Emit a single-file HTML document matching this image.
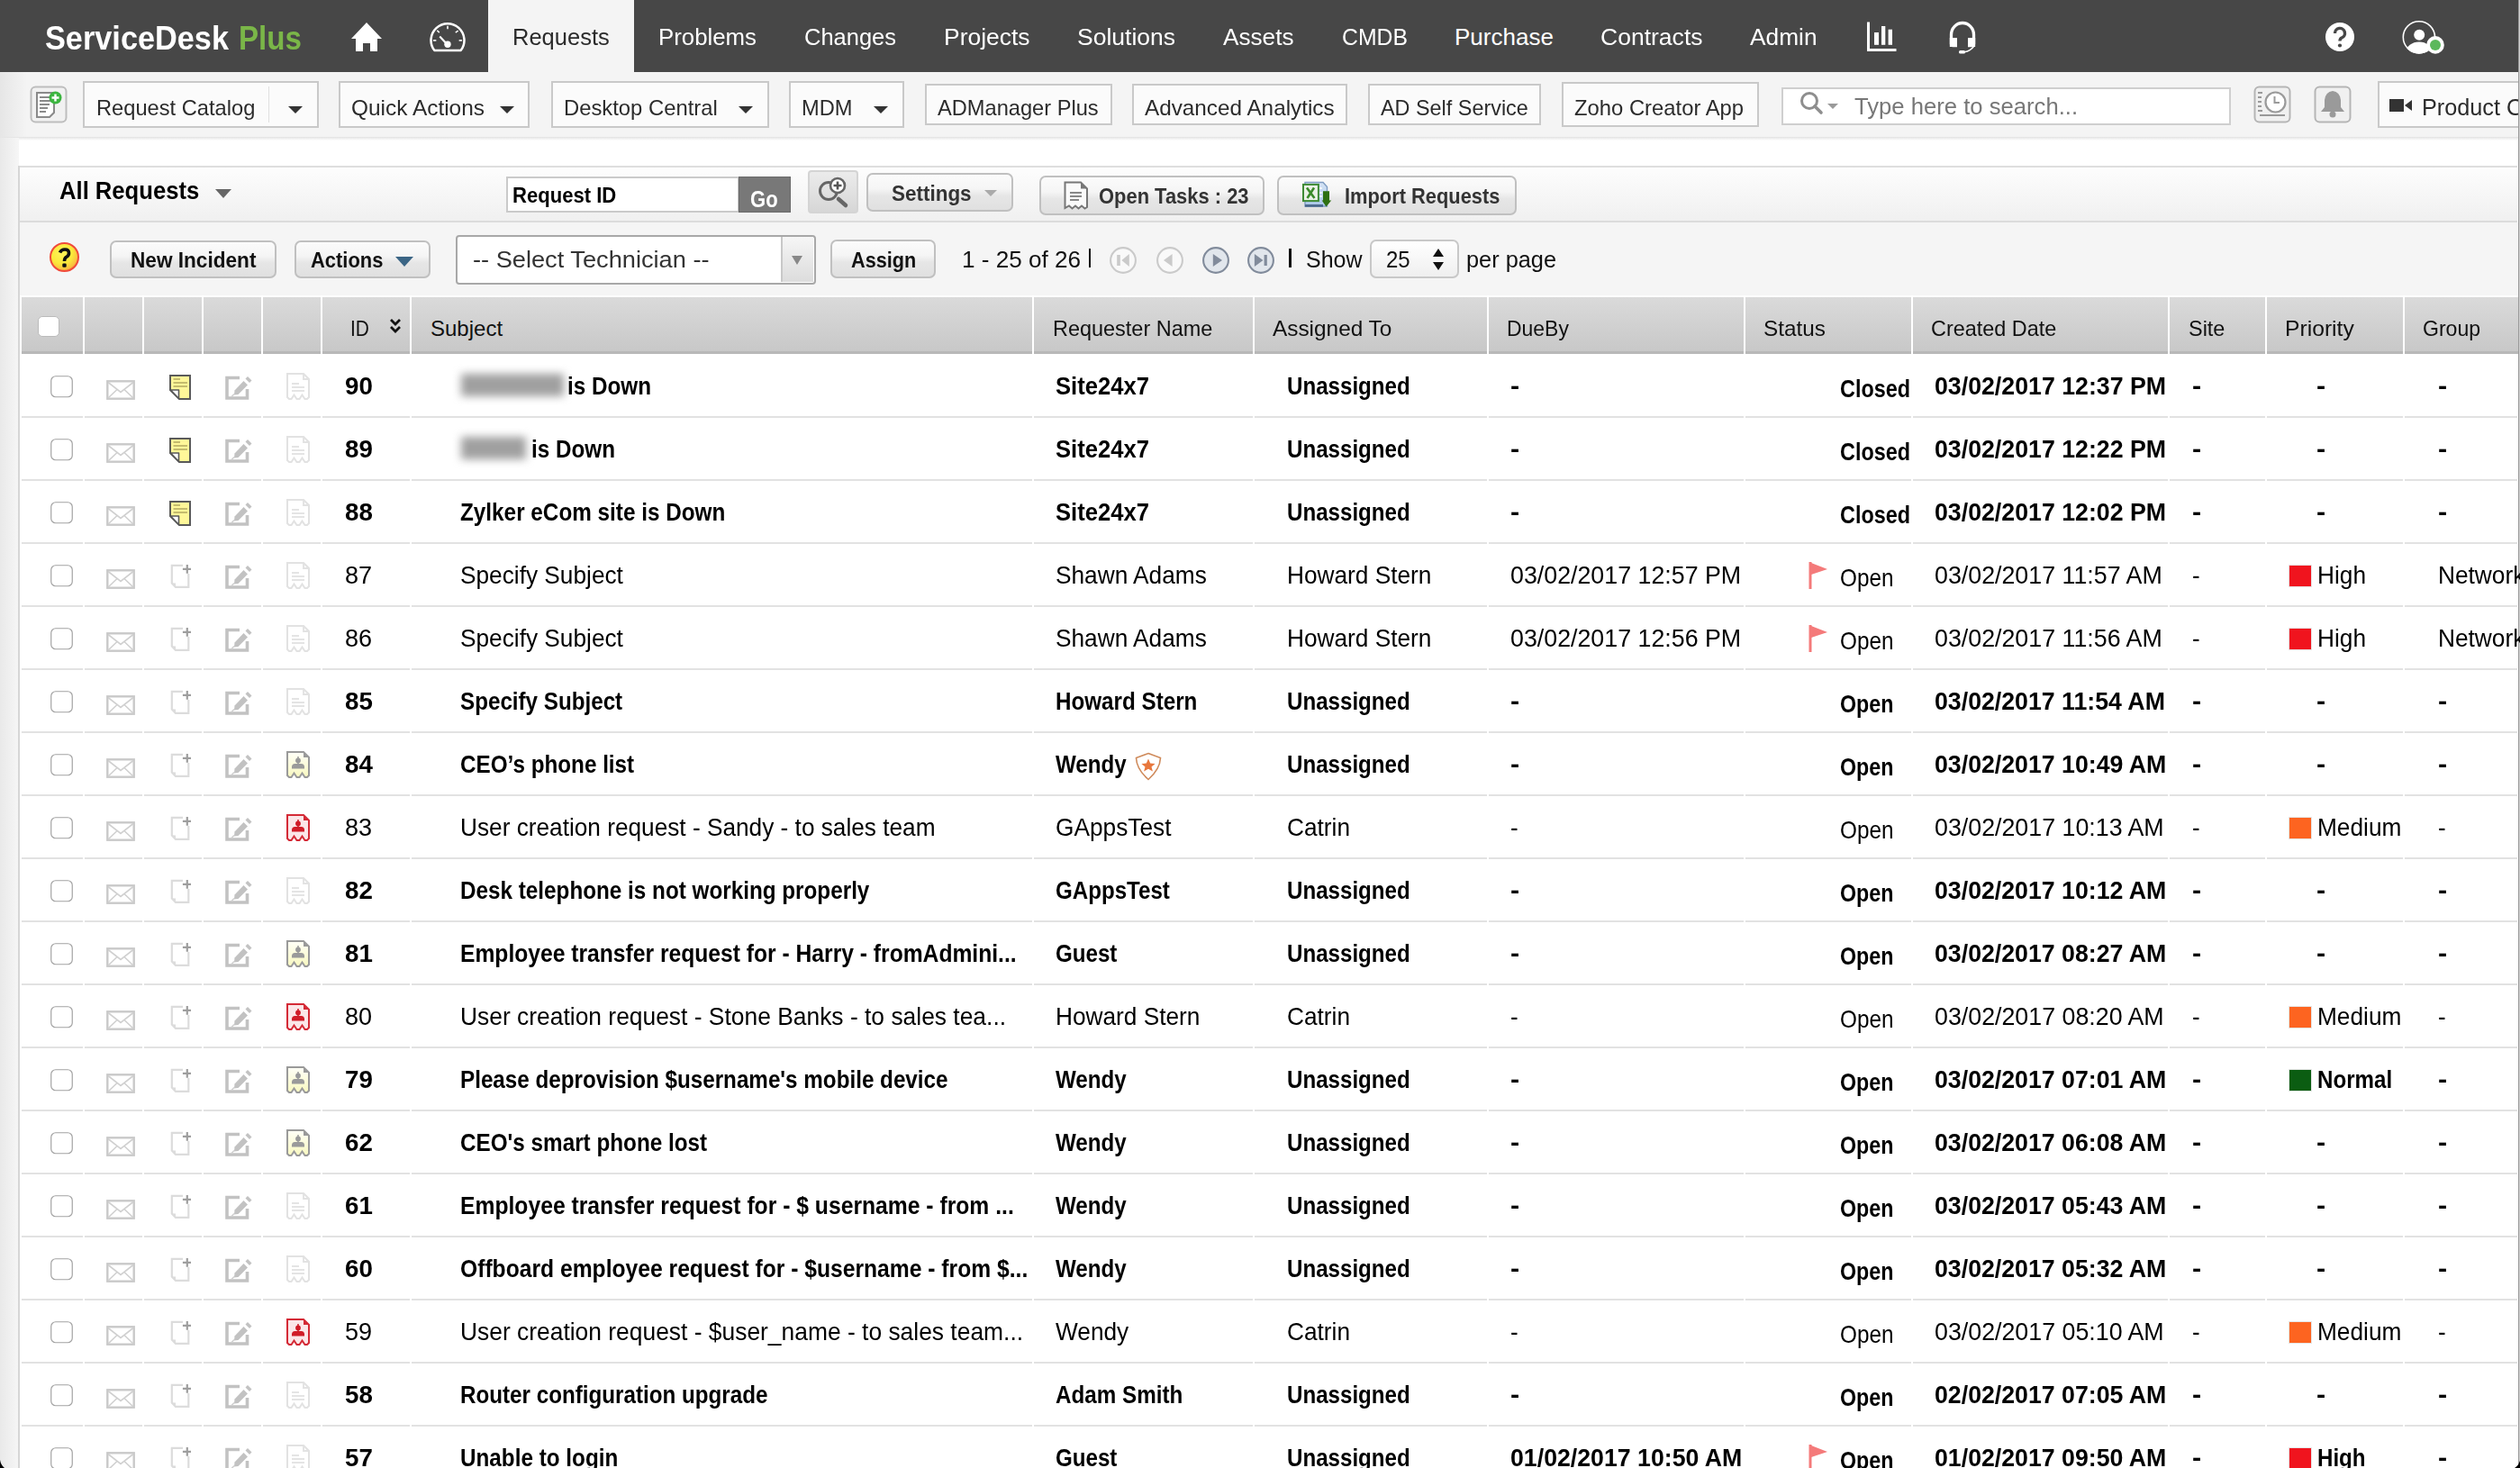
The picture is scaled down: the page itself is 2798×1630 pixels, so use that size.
<!DOCTYPE html><html><head><meta charset="utf-8"><style>

*{box-sizing:border-box;margin:0;padding:0}
html,body{width:2798px;height:1630px;overflow:hidden;background:#fff;font-family:"Liberation Sans", sans-serif;position:relative}
.abs{position:absolute}
.t{position:absolute;white-space:nowrap;line-height:1}
.tbb{position:absolute;border:2px solid #c9c9c9;background:#fbfbfb}
.tri{position:absolute;width:0;height:0;border-left:8px solid transparent;border-right:8px solid transparent;border-top:8px solid #333}
.btn{position:absolute;border:2px solid #c0c0c0;border-radius:7px;background:linear-gradient(#fbfbfb,#f5f5f5 40%,#e6e6e6 60%,#e0e0e0)}
.hc{position:absolute;top:330px;height:63px;background:linear-gradient(#dadada,#c8c8c8);border-bottom:3px solid #b8b8b8}
.cell{position:absolute;height:70px;border-bottom:2px solid #e2e2e2}

</style></head><body>
<div class="abs" style="left:0;top:0;width:2798px;height:80px;background:#474747"></div>
<div class="t" style="left:50.0px;top:23.6px;font-size:37px;font-weight:bold;color:#fff;transform:scaleX(0.9268);transform-origin:0 0;">ServiceDesk</div>
<div class="t" style="left:264.7px;top:23.6px;font-size:37px;font-weight:bold;color:#7ab648;transform:scaleX(0.8959);transform-origin:0 0;">Plus</div>
<svg class="abs" style="left:389px;top:24px" width="36" height="34" viewBox="0 0 36 34"><path d="M18 1 L35 19 L30 19 L30 33 L22 33 L22 24 L14 24 L14 33 L6 33 L6 19 L1 19 Z" fill="#fff"/></svg>
<svg class="abs" style="left:476px;top:23.5px" width="42" height="35" viewBox="0 0 42 36">
<path d="M6 33 A19 19 0 1 1 36 33 Z" fill="none" stroke="#fff" stroke-width="2.6" stroke-linejoin="round"/>
<line x1="21" y1="5" x2="21" y2="8.5" stroke="#fff" stroke-width="1.6"/>
<line x1="9" y1="10" x2="11.5" y2="12.5" stroke="#fff" stroke-width="1.6"/>
<line x1="33" y1="10.5" x2="30" y2="12.5" stroke="#fff" stroke-width="1.6"/>
<line x1="4.5" y1="21.5" x2="8" y2="21.5" stroke="#fff" stroke-width="1.6"/>
<line x1="34" y1="21.5" x2="37.5" y2="21.5" stroke="#fff" stroke-width="1.6"/>
<line x1="12" y1="17" x2="20" y2="25.5" stroke="#fff" stroke-width="2.2"/>
<circle cx="21" cy="26" r="3.8" fill="#fff"/>
</svg>
<div class="abs" style="left:542px;top:0;width:162px;height:80px;background:#f4f4f4"></div>
<div class="t" style="left:569.0px;top:27.9px;font-size:26px;color:#2b2b2b;transform:scaleX(0.9806);transform-origin:0 0;">Requests</div>
<div class="t" style="left:730.6px;top:27.9px;font-size:26px;color:#fff;transform:scaleX(0.9926);transform-origin:0 0;">Problems</div>
<div class="t" style="left:893.0px;top:27.9px;font-size:26px;color:#fff;transform:scaleX(0.9801);transform-origin:0 0;">Changes</div>
<div class="t" style="left:1047.5px;top:27.9px;font-size:26px;color:#fff;transform:scaleX(1.0169);transform-origin:0 0;">Projects</div>
<div class="t" style="left:1196.0px;top:27.9px;font-size:26px;color:#fff;transform:scaleX(1.0191);transform-origin:0 0;">Solutions</div>
<div class="t" style="left:1358.0px;top:27.9px;font-size:26px;color:#fff;transform:scaleX(1.0061);transform-origin:0 0;">Assets</div>
<div class="t" style="left:1490.0px;top:27.9px;font-size:26px;color:#fff;transform:scaleX(0.9536);transform-origin:0 0;">CMDB</div>
<div class="t" style="left:1615.0px;top:27.9px;font-size:26px;color:#fff;">Purchase</div>
<div class="t" style="left:1777.0px;top:27.9px;font-size:26px;color:#fff;transform:scaleX(1.0202);transform-origin:0 0;">Contracts</div>
<div class="t" style="left:1943.0px;top:27.9px;font-size:26px;color:#fff;transform:scaleX(1.0109);transform-origin:0 0;">Admin</div>
<svg class="abs" style="left:2071px;top:24px" width="36" height="34" viewBox="0 0 36 34">
<path d="M3.5 0.5 V31.5 H34.5" fill="none" stroke="#fff" stroke-width="3"/>
<rect x="10" y="12" width="5" height="13.8" fill="#fff"/><rect x="18" y="5" width="4.3" height="20.8" fill="#fff"/><rect x="25.6" y="8.7" width="4.4" height="17.1" fill="#fff"/>
</svg>
<svg class="abs" style="left:2162px;top:23px" width="34" height="38" viewBox="0 0 34 38">
<path d="M4.5 29 V15.5 A12.5 13 0 0 1 29.5 15.5 V29" fill="none" stroke="#fff" stroke-width="3.3"/>
<path d="M2.8 19 H11 V29.2 H6.5 Q2.8 29.2 2.8 25.5 Z" fill="#fff"/><path d="M23 19 H31.2 V25.5 Q31.2 29.2 27.5 29.2 H23 Z" fill="#fff"/>
<path d="M29.5 28.5 Q26 33.5 19 34.8" fill="none" stroke="#fff" stroke-width="1.4"/><rect x="13" y="33" width="7" height="3.4" rx="1.5" fill="#fff"/>
</svg>
<svg class="abs" style="left:2581px;top:24px" width="34" height="34" viewBox="0 0 34 34">
<circle cx="17" cy="17" r="16" fill="#fff"/>
<path d="M11.5 13 A5.5 5.5 0 1 1 19 18 Q17 19 17 21.5" fill="none" stroke="#474747" stroke-width="3.4"/>
<circle cx="17" cy="26.5" r="2.1" fill="#474747"/>
</svg>
<svg class="abs" style="left:2664px;top:21px" width="54" height="42" viewBox="0 0 54 42">
<defs><clipPath id="uc"><circle cx="21.9" cy="20.3" r="18.4"/></clipPath></defs>
<circle cx="21.9" cy="20.3" r="17.6" fill="none" stroke="#fff" stroke-width="1.6"/>
<circle cx="22.2" cy="17.8" r="6" fill="#fff"/>
<ellipse cx="22" cy="37" rx="14.5" ry="11.6" fill="#fff" clip-path="url(#uc)"/>
<circle cx="40" cy="28.9" r="9.8" fill="#fff"/><circle cx="40" cy="28.9" r="6" fill="#5cb85c"/>
</svg>
<div class="abs" style="left:0;top:80px;width:2798px;height:73px;background:#f4f4f4"></div>
<div class="abs" style="left:0;top:80px;width:30px;height:73px;background:linear-gradient(90deg,#e6e6e6,#f4f4f4)"></div>
<div class="abs" style="left:0;top:152px;width:2798px;height:4px;background:linear-gradient(#e2e2e2,#fff)"></div>
<svg class="abs" style="left:33px;top:95px" width="42" height="42" viewBox="0 0 42 42">
<rect x="1.5" y="1.5" width="39" height="39" rx="5" fill="#f1f1f1" stroke="#bdbdbd" stroke-width="2"/>
<path d="M8 8 H27 V30 L22 35 H8 Z" fill="#fff" stroke="#8a8a8a" stroke-width="2"/>
<path d="M11 13 H24 M11 17 H24 M11 21 H22 M11 25 H20 M11 29 H18" stroke="#8a8a8a" stroke-width="1.8"/>
<circle cx="28.5" cy="13.5" r="7" fill="#3cb540"/><path d="M28.5 9.5 V17.5 M24.5 13.5 H32.5" stroke="#fff" stroke-width="2.4"/>
</svg>
<div class="tbb" style="left:92px;top:90px;width:262px;height:52px"></div>
<div class="t" style="left:107.0px;top:107.6px;font-size:24px;color:#2b2b2b;transform:scaleX(0.9862);transform-origin:0 0;">Request Catalog</div>
<div class="abs" style="left:298px;top:96px;width:1px;height:40px;background:#e0e0e0"></div>
<div class="tri" style="left:320px;top:118px"></div>
<div class="tbb" style="left:376px;top:90px;width:212px;height:52px"></div>
<div class="t" style="left:390.3px;top:107.6px;font-size:24px;color:#2b2b2b;transform:scaleX(1.0179);transform-origin:0 0;">Quick Actions</div>
<div class="tri" style="left:555px;top:118px"></div>
<div class="tbb" style="left:612px;top:90px;width:242px;height:52px"></div>
<div class="t" style="left:625.7px;top:107.6px;font-size:24px;color:#2b2b2b;transform:scaleX(0.9920);transform-origin:0 0;">Desktop Central</div>
<div class="tri" style="left:820px;top:118px"></div>
<div class="tbb" style="left:876px;top:90px;width:128px;height:52px"></div>
<div class="t" style="left:890.0px;top:107.6px;font-size:24px;color:#2b2b2b;transform:scaleX(0.9840);transform-origin:0 0;">MDM</div>
<div class="tri" style="left:970px;top:118px"></div>
<div class="tbb" style="left:1027px;top:93px;width:208px;height:46px"></div>
<div class="t" style="left:1041.0px;top:107.6px;font-size:24px;color:#2b2b2b;transform:scaleX(0.9845);transform-origin:0 0;">ADManager Plus</div>
<div class="tbb" style="left:1257px;top:93px;width:239px;height:46px"></div>
<div class="t" style="left:1271.0px;top:107.6px;font-size:24px;color:#2b2b2b;transform:scaleX(1.0119);transform-origin:0 0;">Advanced Analytics</div>
<div class="tbb" style="left:1519px;top:93px;width:192px;height:46px"></div>
<div class="t" style="left:1533.0px;top:107.6px;font-size:24px;color:#2b2b2b;transform:scaleX(0.9747);transform-origin:0 0;">AD Self Service</div>
<div class="tbb" style="left:1734px;top:91px;width:219px;height:50px"></div>
<div class="t" style="left:1747.6px;top:107.6px;font-size:24px;color:#2b2b2b;transform:scaleX(0.9924);transform-origin:0 0;">Zoho Creator App</div>
<div class="abs" style="left:1978px;top:97px;width:499px;height:42px;background:#fff;border:2px solid #cfcfcf"></div>
<svg class="abs" style="left:1996px;top:100px" width="52" height="32" viewBox="0 0 52 32">
<circle cx="13" cy="12" r="8.5" fill="none" stroke="#8e8e8e" stroke-width="3"/><path d="M19 18 L26 25" stroke="#8e8e8e" stroke-width="3.6" stroke-linecap="round"/>
<path d="M33 15 H45 L39 21 Z" fill="#9a9a9a"/></svg>
<div class="t" style="left:2058.6px;top:105.8px;font-size:25px;color:#777;transform:scaleX(1.0257);transform-origin:0 0;">Type here to search...</div>
<svg class="abs" style="left:2502px;top:95px" width="42" height="42" viewBox="0 0 42 42">
<rect x="1.5" y="1.5" width="39" height="39" rx="5" fill="#f0f0f0" stroke="#b5b5b5" stroke-width="2"/>
<path d="M5 8 H10 M5 13 H9 M5 18 H9 M5 23 H9 M5 28 H10 M7 33 H35" stroke="#999" stroke-width="1.8"/>
<circle cx="24.5" cy="18.5" r="11" fill="#fff" stroke="#9a9a9a" stroke-width="2.2"/><path d="M23.5 12 V19 H29" fill="none" stroke="#9a9a9a" stroke-width="2"/>
</svg>
<svg class="abs" style="left:2569px;top:95px" width="42" height="42" viewBox="0 0 42 42">
<rect x="1.5" y="1.5" width="39" height="39" rx="5" fill="#f0f0f0" stroke="#b5b5b5" stroke-width="2"/>
<path d="M21 6 Q13 7 12 16 V24 L8 29 H34 L30 24 V16 Q29 7 21 6 Z" fill="#9a9a9a"/><circle cx="21" cy="32" r="3.5" fill="#9a9a9a"/>
</svg>
<div class="tbb" style="left:2640px;top:90px;width:200px;height:52px"></div>
<svg class="abs" style="left:2653px;top:108px" width="26" height="18" viewBox="0 0 26 18"><rect x="0" y="2" width="16" height="14" fill="#333"/><path d="M17 9 L25 3 V15 Z" fill="#333"/></svg>
<div class="t" style="left:2689.0px;top:106.8px;font-size:25px;color:#2b2b2b;transform:scaleX(1.0096);transform-origin:0 0;">Product Overview</div>
<div class="abs" style="left:0;top:153px;width:21px;height:1477px;background:linear-gradient(90deg,#e9e9e9,#f6f6f6)"></div>
<div class="abs" style="left:20px;top:184px;width:2px;height:1446px;background:#d6d6d6"></div>
<div class="abs" style="left:2796px;top:0;width:1px;height:1630px;background:#9a9a9a"></div><div class="abs" style="left:2797px;top:0;width:1px;height:1630px;background:#cfcfcf"></div>
<div class="abs" style="left:22px;top:184px;width:2773px;height:63px;background:linear-gradient(#fdfdfd,#f0f0f0);border-top:2px solid #dedede;border-bottom:2px solid #dcdcdc"></div>
<div class="t" style="left:66.4px;top:199.1px;font-size:27px;font-weight:bold;color:#000;transform:scaleX(0.9491);transform-origin:0 0;">All Requests</div>
<div class="abs" style="left:239px;top:210px;width:0;height:0;border-left:9px solid transparent;border-right:9px solid transparent;border-top:10px solid #666"></div>
<div class="abs" style="left:562px;top:196px;width:259px;height:40px;background:#fff;border:2px solid #cacaca"></div>
<div class="t" style="left:569.1px;top:205.2px;font-size:24.5px;font-weight:bold;color:#000;transform:scaleX(0.9011);transform-origin:0 0;">Request ID</div>
<div class="abs" style="left:820px;top:196px;width:58px;height:40px;background:#787878;border:1px solid #6a6a6a"></div>
<div class="t" style="left:832.7px;top:208.8px;font-size:25px;font-weight:bold;color:#fff;transform:scaleX(0.8815);transform-origin:0 0;">Go</div>
<svg class="abs" style="left:897px;top:189px" width="56" height="48" viewBox="0 0 56 48">
<defs><linearGradient id="mg" x1="0" y1="0" x2="0" y2="1"><stop offset="0" stop-color="#ececec"/><stop offset="1" stop-color="#d6d6d6"/></linearGradient></defs>
<rect x="1" y="1" width="54" height="46" rx="3" fill="url(#mg)" stroke="#d4d4d4" stroke-width="2"/>
<circle cx="23" cy="23" r="9.5" fill="none" stroke="#666" stroke-width="3"/><path d="M34 32 L42 39" stroke="#666" stroke-width="4.5" stroke-linecap="round"/>
<circle cx="33" cy="17" r="8" fill="#fff" stroke="#666" stroke-width="2.6"/><path d="M33 12.5 V21.5 M28.5 17 H37.5" stroke="#555" stroke-width="2.6"/>
</svg>
<div class="btn" style="left:962px;top:192px;width:163px;height:43px"></div>
<div class="t" style="left:990.0px;top:203.2px;font-size:24px;font-weight:bold;color:#333;transform:scaleX(0.9359);transform-origin:0 0;">Settings</div>
<div class="abs" style="left:1093px;top:211px;width:0;height:0;border-left:7px solid transparent;border-right:7px solid transparent;border-top:7px solid #aaa"></div>
<div class="btn" style="left:1154px;top:195px;width:250px;height:44px"></div>
<div class="t" style="left:1220.3px;top:205.6px;font-size:24px;font-weight:bold;color:#333;transform:scaleX(0.9134);transform-origin:0 0;">Open Tasks : 23</div>
<svg class="abs" style="left:1180px;top:201px" width="30" height="32" viewBox="0 0 30 32">
<path d="M2.5 1.5 H20 L27 8.5 V29 L24.5 30.5 L21 27.5 L17.5 30.5 L14 27.5 L10.5 30.5 L7 27.5 L2.5 30 Z" fill="#fafafa" stroke="#777" stroke-width="2"/>
<path d="M20 1.5 V8.5 H27 Z" fill="#777"/><path d="M8 13 H21 M8 17 H21 M8 21 H18" stroke="#888" stroke-width="1.8"/></svg>
<div class="btn" style="left:1418px;top:195px;width:266px;height:44px"></div>
<div class="t" style="left:1492.6px;top:205.6px;font-size:24px;font-weight:bold;color:#333;transform:scaleX(0.9105);transform-origin:0 0;">Import Requests</div>
<svg class="abs" style="left:1444px;top:200px" width="36" height="32" viewBox="0 0 36 32">
<defs><linearGradient id="xb" x1="0" y1="0" x2="0" y2="1"><stop offset="0" stop-color="#d6e4f5"/><stop offset="1" stop-color="#a9c6ea"/></linearGradient></defs>
<path d="M5 2.5 H25 L29.5 7.5 V29 H5 Z" fill="url(#xb)" stroke="#7f9cc2" stroke-width="1.4"/>
<rect x="5" y="27" width="20" height="2.8" fill="#4d6a8e"/>
<path d="M21 9 H24 M21 14 H24 M21 18 H24" stroke="#fff" stroke-width="1.6"/>
<rect x="3" y="4.9" width="16.9" height="18.2" fill="#eaf1e6" stroke="#3e8a34" stroke-width="2"/>
<path d="M7 8.5 L15.5 20 M15 8.5 L7.5 20" stroke="#3a8a2a" stroke-width="2.6"/>
<path d="M25 12.2 H32 V22.6 H34.2 L28.5 29.4 L23.7 22.6 H25 Z" fill="#2f7012"/>
</svg>
<div class="abs" style="left:22px;top:247px;width:2774px;height:81px;background:#f5f5f5"></div>
<svg class="abs" style="left:54px;top:268px" width="35" height="35" viewBox="0 0 35 35">
<defs><radialGradient id="yg" cx="0.4" cy="0.35" r="0.7"><stop offset="0" stop-color="#fff35a"/><stop offset="0.55" stop-color="#fbe93a"/><stop offset="0.85" stop-color="#f9c040"/><stop offset="1" stop-color="#f58a30"/></radialGradient></defs>
<circle cx="17.5" cy="17.5" r="15.5" fill="url(#yg)" stroke="#f04a3a" stroke-width="2"/>
<path d="M12.5 12.5 Q14 9 18 9 Q22.5 9 22.5 13 Q22.5 16 19.5 17.5 Q17.5 18.8 17.5 22" fill="none" stroke="#111" stroke-width="3.6"/><rect x="15.3" y="24.5" width="4.4" height="4.2" rx="1.2" fill="#111"/></svg>
<div class="btn" style="left:122px;top:267px;width:185px;height:42px"></div>
<div class="t" style="left:144.6px;top:277.4px;font-size:24px;font-weight:bold;color:#111;transform:scaleX(0.9418);transform-origin:0 0;">New Incident</div>
<div class="btn" style="left:327px;top:267px;width:151px;height:42px"></div>
<div class="t" style="left:344.6px;top:277.4px;font-size:24px;font-weight:bold;color:#111;transform:scaleX(0.9136);transform-origin:0 0;">Actions</div>
<div class="abs" style="left:439px;top:285px;width:0;height:0;border-left:10px solid transparent;border-right:10px solid transparent;border-top:11px solid #3b6585"></div>
<div class="abs" style="left:506px;top:260.5px;width:400px;height:55px;background:#fff;border:2px solid #a8a8a8;border-radius:4px"></div>
<div class="abs" style="left:867px;top:263px;width:36px;height:50px;background:linear-gradient(#f6f6f6,#dcdcdc);border-left:2px solid #c8c8c8"></div>
<div class="abs" style="left:879px;top:284px;width:0;height:0;border-left:6px solid transparent;border-right:6px solid transparent;border-top:10px solid #888"></div>
<div class="t" style="left:525.0px;top:274.9px;font-size:26px;color:#333;transform:scaleX(1.0461);transform-origin:0 0;">-- Select Technician --</div>
<div class="btn" style="left:922px;top:266px;width:117px;height:43px"></div>
<div class="t" style="left:944.6px;top:277.4px;font-size:24px;font-weight:bold;color:#111;transform:scaleX(0.9024);transform-origin:0 0;">Assign</div>
<div class="t" style="left:1068.0px;top:274.9px;font-size:26px;color:#111;transform:scaleX(1.0036);transform-origin:0 0;">1 - 25 of 26</div>
<div class="abs" style="left:1208.5px;top:275.5px;width:2.6px;height:21.5px;background:#111"></div>
<svg class="abs" style="left:1230.8px;top:273px" width="32" height="32" viewBox="0 0 32 32"><circle cx="16" cy="16" r="13.9" fill="#f9f9f9" stroke="#cacaca" stroke-width="2.1"/><rect x="9.2" y="10" width="3.6" height="12" fill="#cacaca"/><path d="M14.4 16 L22.8 9 V23 Z" fill="#cacaca"/></svg>
<svg class="abs" style="left:1283px;top:273px" width="32" height="32" viewBox="0 0 32 32"><circle cx="16" cy="16" r="13.9" fill="#f9f9f9" stroke="#cacaca" stroke-width="2.1"/><path d="M9 16 L18.6 9 V23 Z" fill="#cacaca"/></svg>
<svg class="abs" style="left:1334px;top:273px" width="32" height="32" viewBox="0 0 32 32"><circle cx="16" cy="16" r="13.9" fill="#e1e6ec" stroke="#818b9b" stroke-width="2.1"/><path d="M23 16 L12.8 9 V23 Z" fill="#818b9b"/></svg>
<svg class="abs" style="left:1384.2px;top:273px" width="32" height="32" viewBox="0 0 32 32"><circle cx="16" cy="16" r="13.9" fill="#e1e6ec" stroke="#818b9b" stroke-width="2.1"/><path d="M18.4 16 L8.9 9 V23 Z" fill="#818b9b"/><rect x="19.6" y="10" width="3.2" height="12" fill="#818b9b"/></svg>
<div class="abs" style="left:1431px;top:275.5px;width:2.6px;height:21.5px;background:#111"></div>
<div class="t" style="left:1450.0px;top:274.9px;font-size:26px;color:#111;transform:scaleX(0.9610);transform-origin:0 0;">Show</div>
<div class="abs" style="left:1521px;top:266px;width:99px;height:43px;background:linear-gradient(#fff,#efefef);border:2px solid #c8c8c8;border-radius:7px"></div>
<div class="t" style="left:1539.3px;top:274.9px;font-size:26px;color:#111;transform:scaleX(0.9233);transform-origin:0 0;">25</div>
<svg class="abs" style="left:1590px;top:274px" width="14" height="28" viewBox="0 0 14 28"><path d="M7 2 L13 11 H1 Z M7 26 L13 17 H1 Z" fill="#111"/></svg>
<div class="t" style="left:1628.0px;top:274.9px;font-size:26px;color:#111;transform:scaleX(0.9744);transform-origin:0 0;">per page</div>
<div class="hc" style="left:24px;width:68px"></div>
<div class="hc" style="left:94px;width:64px"></div>
<div class="hc" style="left:160px;width:64px"></div>
<div class="hc" style="left:226px;width:64px"></div>
<div class="hc" style="left:292px;width:64px"></div>
<div class="hc" style="left:358px;width:97px"></div>
<div class="hc" style="left:457px;width:689px"></div>
<div class="hc" style="left:1148px;width:243px"></div>
<div class="hc" style="left:1393px;width:258px"></div>
<div class="hc" style="left:1653px;width:283px"></div>
<div class="hc" style="left:1938px;width:184px"></div>
<div class="hc" style="left:2124px;width:283px"></div>
<div class="hc" style="left:2409px;width:106px"></div>
<div class="hc" style="left:2517px;width:151px"></div>
<div class="hc" style="left:2670px;width:126px"></div>
<div class="abs" style="left:42px;top:351px;width:24px;height:23px;background:#fff;border:1px solid #bbb;border-radius:5px"></div>
<div class="t" style="left:389.4px;top:352.9px;font-size:24px;color:#111;transform:scaleX(0.8708);transform-origin:0 0;">ID</div>
<div class="t" style="left:478.0px;top:352.9px;font-size:24px;color:#111;">Subject</div>
<div class="t" style="left:1169.2px;top:352.9px;font-size:24px;color:#111;transform:scaleX(0.9774);transform-origin:0 0;">Requester Name</div>
<div class="t" style="left:1413.4px;top:352.9px;font-size:24px;color:#111;transform:scaleX(1.0153);transform-origin:0 0;">Assigned To</div>
<div class="t" style="left:1672.9px;top:352.9px;font-size:24px;color:#111;transform:scaleX(0.9565);transform-origin:0 0;">DueBy</div>
<div class="t" style="left:1958.4px;top:352.9px;font-size:24px;color:#111;transform:scaleX(1.0127);transform-origin:0 0;">Status</div>
<div class="t" style="left:2143.8px;top:352.9px;font-size:24px;color:#111;transform:scaleX(0.9752);transform-origin:0 0;">Created Date</div>
<div class="t" style="left:2429.6px;top:352.9px;font-size:24px;color:#111;transform:scaleX(0.9769);transform-origin:0 0;">Site</div>
<div class="t" style="left:2537.0px;top:352.9px;font-size:24px;color:#111;transform:scaleX(1.0285);transform-origin:0 0;">Priority</div>
<div class="t" style="left:2690.2px;top:352.9px;font-size:24px;color:#111;transform:scaleX(0.9611);transform-origin:0 0;">Group</div>
<svg class="abs" style="left:432px;top:353px" width="14" height="19" viewBox="0 0 14 19"><path d="M2 2 L7 7 L12 2 M2 10 L7 15 L12 10" fill="none" stroke="#111" stroke-width="2.8"/></svg>
<div class="cell" style="left:24px;top:394px;width:68px"></div>
<div class="cell" style="left:94px;top:394px;width:64px"></div>
<div class="cell" style="left:160px;top:394px;width:64px"></div>
<div class="cell" style="left:226px;top:394px;width:64px"></div>
<div class="cell" style="left:292px;top:394px;width:64px"></div>
<div class="cell" style="left:358px;top:394px;width:97px"></div>
<div class="cell" style="left:457px;top:394px;width:689px"></div>
<div class="cell" style="left:1148px;top:394px;width:243px"></div>
<div class="cell" style="left:1393px;top:394px;width:258px"></div>
<div class="cell" style="left:1653px;top:394px;width:283px"></div>
<div class="cell" style="left:1938px;top:394px;width:184px"></div>
<div class="cell" style="left:2124px;top:394px;width:283px"></div>
<div class="cell" style="left:2409px;top:394px;width:106px"></div>
<div class="cell" style="left:2517px;top:394px;width:151px"></div>
<div class="cell" style="left:2670px;top:394px;width:125px"></div>
<svg class="abs" style="left:55.5px;top:416.5px" width="25" height="25" viewBox="0 0 25 25"><rect x="0.75" y="0.75" width="23.5" height="23" rx="5" fill="#fff" stroke="#a3a3a3" stroke-width="1.2"/></svg>
<svg class="abs" style="left:118px;top:422px" width="32" height="22" viewBox="0 0 32 22"><rect x="1.3" y="1.3" width="29.4" height="19.4" fill="#fff" stroke="#c9c9c9" stroke-width="2.4"/><path d="M2 2.5 L16 13.5 L30 2.5 M2 20 L12 10.5 M30 20 L20 10.5" fill="none" stroke="#d0d0d0" stroke-width="1.6"/></svg>
<svg class="abs" style="left:188px;top:416px" width="24" height="28" viewBox="0 0 24 28"><path d="M1 1 H23 V27 H11 L1 17 Z" fill="#fff799" stroke="#5a5a5a" stroke-width="2"/><path d="M1.5 17 H10.5 V26.5 Z" fill="#fff" stroke="#5a5a5a" stroke-width="1.6" stroke-linejoin="round"/><path d="M4.5 5 H12 M4.5 9 H20 M4.5 13 H20" stroke="#b3a960" stroke-width="1.6"/></svg>
<svg class="abs" style="left:250px;top:416px" width="30" height="28" viewBox="0 0 30 28"><path d="M16 3.5 H2 V26 H24.5 V16" fill="none" stroke="#c2c2c2" stroke-width="3.6"/><path d="M10.5 17.5 L20.5 7 L25 11.5 L14.5 22 L10 22.5 Z" fill="#c2c2c2"/><path d="M22.5 4.5 L25 2 L29.5 6.5 L27 9 Z" fill="#c2c2c2"/><path d="M7 24.5 L10 21.5" stroke="#d0d0d0" stroke-width="1.6"/></svg>
<svg class="abs" style="left:318px;top:414px" width="26" height="30" viewBox="0 0 26 30"><path d="M1 1 H19 L25 7 V27 L23 29 H20.5 L17.5 24.5 L14.5 29 H11.5 L8.5 24.5 L5.5 29 H3 L1 27 Z" fill="#fff" stroke="#e2e2e2" stroke-width="2"/><path d="M19 1 V7 H25" fill="none" stroke="#e2e2e2" stroke-width="1.8"/><path d="M6 12 H14 M6 16 H20 M6 20 H20" stroke="#e4e4e4" stroke-width="1.8"/></svg>
<div class="t" style="left:382.5px;top:414.6px;font-size:27.3px;font-weight:bold;color:#000;transform:scaleX(1.0152);transform-origin:0 0;">90</div>
<div class="abs" style="left:512px;top:415px;width:114px;height:25px;background:#a0a0a0;filter:blur(5px)"></div>
<div class="t" style="left:630.0px;top:414.6px;font-size:27.3px;font-weight:bold;color:#000;transform:scaleX(0.8888);transform-origin:0 0;">is Down</div>
<div class="t" style="left:1172.0px;top:414.6px;font-size:27.3px;font-weight:bold;color:#000;transform:scaleX(0.9378);transform-origin:0 0;">Site24x7</div>
<div class="t" style="left:1429.0px;top:414.6px;font-size:27.3px;font-weight:bold;color:#000;transform:scaleX(0.8838);transform-origin:0 0;">Unassigned</div>
<div class="t" style="left:1677.0px;top:414.6px;font-size:27.3px;font-weight:bold;color:#000;transform:scaleX(1.1143);transform-origin:0 0;">-</div>
<div class="t" style="left:2043.0px;top:418.3px;font-size:27.3px;font-weight:bold;color:#000;transform:scaleX(0.8570);transform-origin:0 0;">Closed</div>
<div class="t" style="left:2148.0px;top:414.6px;font-size:27.3px;font-weight:bold;color:#000;transform:scaleX(0.9790);transform-origin:0 0;">03/02/2017 12:37 PM</div>
<div class="t" style="left:2434.0px;top:414.6px;font-size:27.3px;font-weight:bold;color:#000;transform:scaleX(1.1143);transform-origin:0 0;">-</div>
<div class="t" style="left:2572.0px;top:414.6px;font-size:27.3px;font-weight:bold;color:#000;transform:scaleX(1.1143);transform-origin:0 0;">-</div>
<div class="t" style="left:2707.0px;top:414.6px;font-size:27.3px;font-weight:bold;color:#000;transform:scaleX(1.1143);transform-origin:0 0;">-</div>
<div class="cell" style="left:24px;top:464px;width:68px"></div>
<div class="cell" style="left:94px;top:464px;width:64px"></div>
<div class="cell" style="left:160px;top:464px;width:64px"></div>
<div class="cell" style="left:226px;top:464px;width:64px"></div>
<div class="cell" style="left:292px;top:464px;width:64px"></div>
<div class="cell" style="left:358px;top:464px;width:97px"></div>
<div class="cell" style="left:457px;top:464px;width:689px"></div>
<div class="cell" style="left:1148px;top:464px;width:243px"></div>
<div class="cell" style="left:1393px;top:464px;width:258px"></div>
<div class="cell" style="left:1653px;top:464px;width:283px"></div>
<div class="cell" style="left:1938px;top:464px;width:184px"></div>
<div class="cell" style="left:2124px;top:464px;width:283px"></div>
<div class="cell" style="left:2409px;top:464px;width:106px"></div>
<div class="cell" style="left:2517px;top:464px;width:151px"></div>
<div class="cell" style="left:2670px;top:464px;width:125px"></div>
<svg class="abs" style="left:55.5px;top:486.5px" width="25" height="25" viewBox="0 0 25 25"><rect x="0.75" y="0.75" width="23.5" height="23" rx="5" fill="#fff" stroke="#a3a3a3" stroke-width="1.2"/></svg>
<svg class="abs" style="left:118px;top:492px" width="32" height="22" viewBox="0 0 32 22"><rect x="1.3" y="1.3" width="29.4" height="19.4" fill="#fff" stroke="#c9c9c9" stroke-width="2.4"/><path d="M2 2.5 L16 13.5 L30 2.5 M2 20 L12 10.5 M30 20 L20 10.5" fill="none" stroke="#d0d0d0" stroke-width="1.6"/></svg>
<svg class="abs" style="left:188px;top:486px" width="24" height="28" viewBox="0 0 24 28"><path d="M1 1 H23 V27 H11 L1 17 Z" fill="#fff799" stroke="#5a5a5a" stroke-width="2"/><path d="M1.5 17 H10.5 V26.5 Z" fill="#fff" stroke="#5a5a5a" stroke-width="1.6" stroke-linejoin="round"/><path d="M4.5 5 H12 M4.5 9 H20 M4.5 13 H20" stroke="#b3a960" stroke-width="1.6"/></svg>
<svg class="abs" style="left:250px;top:486px" width="30" height="28" viewBox="0 0 30 28"><path d="M16 3.5 H2 V26 H24.5 V16" fill="none" stroke="#c2c2c2" stroke-width="3.6"/><path d="M10.5 17.5 L20.5 7 L25 11.5 L14.5 22 L10 22.5 Z" fill="#c2c2c2"/><path d="M22.5 4.5 L25 2 L29.5 6.5 L27 9 Z" fill="#c2c2c2"/><path d="M7 24.5 L10 21.5" stroke="#d0d0d0" stroke-width="1.6"/></svg>
<svg class="abs" style="left:318px;top:484px" width="26" height="30" viewBox="0 0 26 30"><path d="M1 1 H19 L25 7 V27 L23 29 H20.5 L17.5 24.5 L14.5 29 H11.5 L8.5 24.5 L5.5 29 H3 L1 27 Z" fill="#fff" stroke="#e2e2e2" stroke-width="2"/><path d="M19 1 V7 H25" fill="none" stroke="#e2e2e2" stroke-width="1.8"/><path d="M6 12 H14 M6 16 H20 M6 20 H20" stroke="#e4e4e4" stroke-width="1.8"/></svg>
<div class="t" style="left:382.5px;top:484.6px;font-size:27.3px;font-weight:bold;color:#000;transform:scaleX(1.0152);transform-origin:0 0;">89</div>
<div class="abs" style="left:512px;top:485px;width:72px;height:25px;background:#a0a0a0;filter:blur(5px)"></div>
<div class="t" style="left:590.0px;top:484.6px;font-size:27.3px;font-weight:bold;color:#000;transform:scaleX(0.8888);transform-origin:0 0;">is Down</div>
<div class="t" style="left:1172.0px;top:484.6px;font-size:27.3px;font-weight:bold;color:#000;transform:scaleX(0.9378);transform-origin:0 0;">Site24x7</div>
<div class="t" style="left:1429.0px;top:484.6px;font-size:27.3px;font-weight:bold;color:#000;transform:scaleX(0.8838);transform-origin:0 0;">Unassigned</div>
<div class="t" style="left:1677.0px;top:484.6px;font-size:27.3px;font-weight:bold;color:#000;transform:scaleX(1.1143);transform-origin:0 0;">-</div>
<div class="t" style="left:2043.0px;top:488.3px;font-size:27.3px;font-weight:bold;color:#000;transform:scaleX(0.8570);transform-origin:0 0;">Closed</div>
<div class="t" style="left:2148.0px;top:484.6px;font-size:27.3px;font-weight:bold;color:#000;transform:scaleX(0.9790);transform-origin:0 0;">03/02/2017 12:22 PM</div>
<div class="t" style="left:2434.0px;top:484.6px;font-size:27.3px;font-weight:bold;color:#000;transform:scaleX(1.1143);transform-origin:0 0;">-</div>
<div class="t" style="left:2572.0px;top:484.6px;font-size:27.3px;font-weight:bold;color:#000;transform:scaleX(1.1143);transform-origin:0 0;">-</div>
<div class="t" style="left:2707.0px;top:484.6px;font-size:27.3px;font-weight:bold;color:#000;transform:scaleX(1.1143);transform-origin:0 0;">-</div>
<div class="cell" style="left:24px;top:534px;width:68px"></div>
<div class="cell" style="left:94px;top:534px;width:64px"></div>
<div class="cell" style="left:160px;top:534px;width:64px"></div>
<div class="cell" style="left:226px;top:534px;width:64px"></div>
<div class="cell" style="left:292px;top:534px;width:64px"></div>
<div class="cell" style="left:358px;top:534px;width:97px"></div>
<div class="cell" style="left:457px;top:534px;width:689px"></div>
<div class="cell" style="left:1148px;top:534px;width:243px"></div>
<div class="cell" style="left:1393px;top:534px;width:258px"></div>
<div class="cell" style="left:1653px;top:534px;width:283px"></div>
<div class="cell" style="left:1938px;top:534px;width:184px"></div>
<div class="cell" style="left:2124px;top:534px;width:283px"></div>
<div class="cell" style="left:2409px;top:534px;width:106px"></div>
<div class="cell" style="left:2517px;top:534px;width:151px"></div>
<div class="cell" style="left:2670px;top:534px;width:125px"></div>
<svg class="abs" style="left:55.5px;top:556.5px" width="25" height="25" viewBox="0 0 25 25"><rect x="0.75" y="0.75" width="23.5" height="23" rx="5" fill="#fff" stroke="#a3a3a3" stroke-width="1.2"/></svg>
<svg class="abs" style="left:118px;top:562px" width="32" height="22" viewBox="0 0 32 22"><rect x="1.3" y="1.3" width="29.4" height="19.4" fill="#fff" stroke="#c9c9c9" stroke-width="2.4"/><path d="M2 2.5 L16 13.5 L30 2.5 M2 20 L12 10.5 M30 20 L20 10.5" fill="none" stroke="#d0d0d0" stroke-width="1.6"/></svg>
<svg class="abs" style="left:188px;top:556px" width="24" height="28" viewBox="0 0 24 28"><path d="M1 1 H23 V27 H11 L1 17 Z" fill="#fff799" stroke="#5a5a5a" stroke-width="2"/><path d="M1.5 17 H10.5 V26.5 Z" fill="#fff" stroke="#5a5a5a" stroke-width="1.6" stroke-linejoin="round"/><path d="M4.5 5 H12 M4.5 9 H20 M4.5 13 H20" stroke="#b3a960" stroke-width="1.6"/></svg>
<svg class="abs" style="left:250px;top:556px" width="30" height="28" viewBox="0 0 30 28"><path d="M16 3.5 H2 V26 H24.5 V16" fill="none" stroke="#c2c2c2" stroke-width="3.6"/><path d="M10.5 17.5 L20.5 7 L25 11.5 L14.5 22 L10 22.5 Z" fill="#c2c2c2"/><path d="M22.5 4.5 L25 2 L29.5 6.5 L27 9 Z" fill="#c2c2c2"/><path d="M7 24.5 L10 21.5" stroke="#d0d0d0" stroke-width="1.6"/></svg>
<svg class="abs" style="left:318px;top:554px" width="26" height="30" viewBox="0 0 26 30"><path d="M1 1 H19 L25 7 V27 L23 29 H20.5 L17.5 24.5 L14.5 29 H11.5 L8.5 24.5 L5.5 29 H3 L1 27 Z" fill="#fff" stroke="#e2e2e2" stroke-width="2"/><path d="M19 1 V7 H25" fill="none" stroke="#e2e2e2" stroke-width="1.8"/><path d="M6 12 H14 M6 16 H20 M6 20 H20" stroke="#e4e4e4" stroke-width="1.8"/></svg>
<div class="t" style="left:382.5px;top:554.6px;font-size:27.3px;font-weight:bold;color:#000;transform:scaleX(1.0152);transform-origin:0 0;">88</div>
<div class="t" style="left:511.0px;top:554.6px;font-size:27.3px;font-weight:bold;color:#000;transform:scaleX(0.8901);transform-origin:0 0;">Zylker eCom site is Down</div>
<div class="t" style="left:1172.0px;top:554.6px;font-size:27.3px;font-weight:bold;color:#000;transform:scaleX(0.9378);transform-origin:0 0;">Site24x7</div>
<div class="t" style="left:1429.0px;top:554.6px;font-size:27.3px;font-weight:bold;color:#000;transform:scaleX(0.8838);transform-origin:0 0;">Unassigned</div>
<div class="t" style="left:1677.0px;top:554.6px;font-size:27.3px;font-weight:bold;color:#000;transform:scaleX(1.1143);transform-origin:0 0;">-</div>
<div class="t" style="left:2043.0px;top:558.3px;font-size:27.3px;font-weight:bold;color:#000;transform:scaleX(0.8570);transform-origin:0 0;">Closed</div>
<div class="t" style="left:2148.0px;top:554.6px;font-size:27.3px;font-weight:bold;color:#000;transform:scaleX(0.9790);transform-origin:0 0;">03/02/2017 12:02 PM</div>
<div class="t" style="left:2434.0px;top:554.6px;font-size:27.3px;font-weight:bold;color:#000;transform:scaleX(1.1143);transform-origin:0 0;">-</div>
<div class="t" style="left:2572.0px;top:554.6px;font-size:27.3px;font-weight:bold;color:#000;transform:scaleX(1.1143);transform-origin:0 0;">-</div>
<div class="t" style="left:2707.0px;top:554.6px;font-size:27.3px;font-weight:bold;color:#000;transform:scaleX(1.1143);transform-origin:0 0;">-</div>
<div class="cell" style="left:24px;top:604px;width:68px"></div>
<div class="cell" style="left:94px;top:604px;width:64px"></div>
<div class="cell" style="left:160px;top:604px;width:64px"></div>
<div class="cell" style="left:226px;top:604px;width:64px"></div>
<div class="cell" style="left:292px;top:604px;width:64px"></div>
<div class="cell" style="left:358px;top:604px;width:97px"></div>
<div class="cell" style="left:457px;top:604px;width:689px"></div>
<div class="cell" style="left:1148px;top:604px;width:243px"></div>
<div class="cell" style="left:1393px;top:604px;width:258px"></div>
<div class="cell" style="left:1653px;top:604px;width:283px"></div>
<div class="cell" style="left:1938px;top:604px;width:184px"></div>
<div class="cell" style="left:2124px;top:604px;width:283px"></div>
<div class="cell" style="left:2409px;top:604px;width:106px"></div>
<div class="cell" style="left:2517px;top:604px;width:151px"></div>
<div class="cell" style="left:2670px;top:604px;width:125px"></div>
<svg class="abs" style="left:55.5px;top:626.5px" width="25" height="25" viewBox="0 0 25 25"><rect x="0.75" y="0.75" width="23.5" height="23" rx="5" fill="#fff" stroke="#a3a3a3" stroke-width="1.2"/></svg>
<svg class="abs" style="left:118px;top:632px" width="32" height="22" viewBox="0 0 32 22"><rect x="1.3" y="1.3" width="29.4" height="19.4" fill="#fff" stroke="#c9c9c9" stroke-width="2.4"/><path d="M2 2.5 L16 13.5 L30 2.5 M2 20 L12 10.5 M30 20 L20 10.5" fill="none" stroke="#d0d0d0" stroke-width="1.6"/></svg>
<svg class="abs" style="left:188px;top:626px" width="24" height="28" viewBox="0 0 24 28"><path d="M15 1.8 H2.8 V21.5 L7 25.8 H21.3 V11" fill="none" stroke="#dcdcdc" stroke-width="2.2"/><path d="M2.8 21.5 H7 V25.8 Z" fill="#dcdcdc"/><path d="M19.8 1 V10.8 M14.9 5.9 H24" stroke="#9e9e9e" stroke-width="2.2"/></svg>
<svg class="abs" style="left:250px;top:626px" width="30" height="28" viewBox="0 0 30 28"><path d="M16 3.5 H2 V26 H24.5 V16" fill="none" stroke="#c2c2c2" stroke-width="3.6"/><path d="M10.5 17.5 L20.5 7 L25 11.5 L14.5 22 L10 22.5 Z" fill="#c2c2c2"/><path d="M22.5 4.5 L25 2 L29.5 6.5 L27 9 Z" fill="#c2c2c2"/><path d="M7 24.5 L10 21.5" stroke="#d0d0d0" stroke-width="1.6"/></svg>
<svg class="abs" style="left:318px;top:624px" width="26" height="30" viewBox="0 0 26 30"><path d="M1 1 H19 L25 7 V27 L23 29 H20.5 L17.5 24.5 L14.5 29 H11.5 L8.5 24.5 L5.5 29 H3 L1 27 Z" fill="#fff" stroke="#e2e2e2" stroke-width="2"/><path d="M19 1 V7 H25" fill="none" stroke="#e2e2e2" stroke-width="1.8"/><path d="M6 12 H14 M6 16 H20 M6 20 H20" stroke="#e4e4e4" stroke-width="1.8"/></svg>
<div class="t" style="left:382.5px;top:624.6px;font-size:27.3px;color:#000;transform:scaleX(0.9905);transform-origin:0 0;">87</div>
<div class="t" style="left:511.0px;top:624.6px;font-size:27.3px;color:#000;transform:scaleX(0.9615);transform-origin:0 0;">Specify Subject</div>
<div class="t" style="left:1172.0px;top:624.6px;font-size:27.3px;color:#000;transform:scaleX(0.9615);transform-origin:0 0;">Shawn Adams</div>
<div class="t" style="left:1429.0px;top:624.6px;font-size:27.3px;color:#000;transform:scaleX(0.9615);transform-origin:0 0;">Howard Stern</div>
<div class="t" style="left:1677.0px;top:624.6px;font-size:27.3px;color:#000;transform:scaleX(0.9813);transform-origin:0 0;">03/02/2017 12:57 PM</div>
<svg class="abs" style="left:2008px;top:623px" width="22" height="31" viewBox="0 0 22 31"><path d="M2 1 V31" stroke="#f47a7a" stroke-width="3"/><path d="M3 2 L21 9 L3 15 Z" fill="#f47a7a"/></svg>
<div class="t" style="left:2043.0px;top:628.3px;font-size:27.3px;color:#000;transform:scaleX(0.8910);transform-origin:0 0;">Open</div>
<div class="t" style="left:2148.0px;top:624.6px;font-size:27.3px;color:#000;transform:scaleX(0.9813);transform-origin:0 0;">03/02/2017 11:57 AM</div>
<div class="t" style="left:2434.0px;top:624.6px;font-size:27.3px;color:#000;transform:scaleX(0.9524);transform-origin:0 0;">-</div>
<div class="abs" style="left:2542px;top:628px;width:24px;height:23px;background:#f0141e;outline:1px solid #e6e6e6"></div>
<div class="t" style="left:2573.0px;top:624.6px;font-size:27.3px;color:#000;transform:scaleX(0.9619);transform-origin:0 0;">High</div>
<div class="t" style="left:2707.0px;top:624.6px;font-size:27.3px;color:#000;transform:scaleX(0.9619);transform-origin:0 0;">Network</div>
<div class="cell" style="left:24px;top:674px;width:68px"></div>
<div class="cell" style="left:94px;top:674px;width:64px"></div>
<div class="cell" style="left:160px;top:674px;width:64px"></div>
<div class="cell" style="left:226px;top:674px;width:64px"></div>
<div class="cell" style="left:292px;top:674px;width:64px"></div>
<div class="cell" style="left:358px;top:674px;width:97px"></div>
<div class="cell" style="left:457px;top:674px;width:689px"></div>
<div class="cell" style="left:1148px;top:674px;width:243px"></div>
<div class="cell" style="left:1393px;top:674px;width:258px"></div>
<div class="cell" style="left:1653px;top:674px;width:283px"></div>
<div class="cell" style="left:1938px;top:674px;width:184px"></div>
<div class="cell" style="left:2124px;top:674px;width:283px"></div>
<div class="cell" style="left:2409px;top:674px;width:106px"></div>
<div class="cell" style="left:2517px;top:674px;width:151px"></div>
<div class="cell" style="left:2670px;top:674px;width:125px"></div>
<svg class="abs" style="left:55.5px;top:696.5px" width="25" height="25" viewBox="0 0 25 25"><rect x="0.75" y="0.75" width="23.5" height="23" rx="5" fill="#fff" stroke="#a3a3a3" stroke-width="1.2"/></svg>
<svg class="abs" style="left:118px;top:702px" width="32" height="22" viewBox="0 0 32 22"><rect x="1.3" y="1.3" width="29.4" height="19.4" fill="#fff" stroke="#c9c9c9" stroke-width="2.4"/><path d="M2 2.5 L16 13.5 L30 2.5 M2 20 L12 10.5 M30 20 L20 10.5" fill="none" stroke="#d0d0d0" stroke-width="1.6"/></svg>
<svg class="abs" style="left:188px;top:696px" width="24" height="28" viewBox="0 0 24 28"><path d="M15 1.8 H2.8 V21.5 L7 25.8 H21.3 V11" fill="none" stroke="#dcdcdc" stroke-width="2.2"/><path d="M2.8 21.5 H7 V25.8 Z" fill="#dcdcdc"/><path d="M19.8 1 V10.8 M14.9 5.9 H24" stroke="#9e9e9e" stroke-width="2.2"/></svg>
<svg class="abs" style="left:250px;top:696px" width="30" height="28" viewBox="0 0 30 28"><path d="M16 3.5 H2 V26 H24.5 V16" fill="none" stroke="#c2c2c2" stroke-width="3.6"/><path d="M10.5 17.5 L20.5 7 L25 11.5 L14.5 22 L10 22.5 Z" fill="#c2c2c2"/><path d="M22.5 4.5 L25 2 L29.5 6.5 L27 9 Z" fill="#c2c2c2"/><path d="M7 24.5 L10 21.5" stroke="#d0d0d0" stroke-width="1.6"/></svg>
<svg class="abs" style="left:318px;top:694px" width="26" height="30" viewBox="0 0 26 30"><path d="M1 1 H19 L25 7 V27 L23 29 H20.5 L17.5 24.5 L14.5 29 H11.5 L8.5 24.5 L5.5 29 H3 L1 27 Z" fill="#fff" stroke="#e2e2e2" stroke-width="2"/><path d="M19 1 V7 H25" fill="none" stroke="#e2e2e2" stroke-width="1.8"/><path d="M6 12 H14 M6 16 H20 M6 20 H20" stroke="#e4e4e4" stroke-width="1.8"/></svg>
<div class="t" style="left:382.5px;top:694.6px;font-size:27.3px;color:#000;transform:scaleX(0.9905);transform-origin:0 0;">86</div>
<div class="t" style="left:511.0px;top:694.6px;font-size:27.3px;color:#000;transform:scaleX(0.9615);transform-origin:0 0;">Specify Subject</div>
<div class="t" style="left:1172.0px;top:694.6px;font-size:27.3px;color:#000;transform:scaleX(0.9615);transform-origin:0 0;">Shawn Adams</div>
<div class="t" style="left:1429.0px;top:694.6px;font-size:27.3px;color:#000;transform:scaleX(0.9615);transform-origin:0 0;">Howard Stern</div>
<div class="t" style="left:1677.0px;top:694.6px;font-size:27.3px;color:#000;transform:scaleX(0.9813);transform-origin:0 0;">03/02/2017 12:56 PM</div>
<svg class="abs" style="left:2008px;top:693px" width="22" height="31" viewBox="0 0 22 31"><path d="M2 1 V31" stroke="#f47a7a" stroke-width="3"/><path d="M3 2 L21 9 L3 15 Z" fill="#f47a7a"/></svg>
<div class="t" style="left:2043.0px;top:698.3px;font-size:27.3px;color:#000;transform:scaleX(0.8910);transform-origin:0 0;">Open</div>
<div class="t" style="left:2148.0px;top:694.6px;font-size:27.3px;color:#000;transform:scaleX(0.9813);transform-origin:0 0;">03/02/2017 11:56 AM</div>
<div class="t" style="left:2434.0px;top:694.6px;font-size:27.3px;color:#000;transform:scaleX(0.9524);transform-origin:0 0;">-</div>
<div class="abs" style="left:2542px;top:698px;width:24px;height:23px;background:#f0141e;outline:1px solid #e6e6e6"></div>
<div class="t" style="left:2573.0px;top:694.6px;font-size:27.3px;color:#000;transform:scaleX(0.9619);transform-origin:0 0;">High</div>
<div class="t" style="left:2707.0px;top:694.6px;font-size:27.3px;color:#000;transform:scaleX(0.9619);transform-origin:0 0;">Network</div>
<div class="cell" style="left:24px;top:744px;width:68px"></div>
<div class="cell" style="left:94px;top:744px;width:64px"></div>
<div class="cell" style="left:160px;top:744px;width:64px"></div>
<div class="cell" style="left:226px;top:744px;width:64px"></div>
<div class="cell" style="left:292px;top:744px;width:64px"></div>
<div class="cell" style="left:358px;top:744px;width:97px"></div>
<div class="cell" style="left:457px;top:744px;width:689px"></div>
<div class="cell" style="left:1148px;top:744px;width:243px"></div>
<div class="cell" style="left:1393px;top:744px;width:258px"></div>
<div class="cell" style="left:1653px;top:744px;width:283px"></div>
<div class="cell" style="left:1938px;top:744px;width:184px"></div>
<div class="cell" style="left:2124px;top:744px;width:283px"></div>
<div class="cell" style="left:2409px;top:744px;width:106px"></div>
<div class="cell" style="left:2517px;top:744px;width:151px"></div>
<div class="cell" style="left:2670px;top:744px;width:125px"></div>
<svg class="abs" style="left:55.5px;top:766.5px" width="25" height="25" viewBox="0 0 25 25"><rect x="0.75" y="0.75" width="23.5" height="23" rx="5" fill="#fff" stroke="#a3a3a3" stroke-width="1.2"/></svg>
<svg class="abs" style="left:118px;top:772px" width="32" height="22" viewBox="0 0 32 22"><rect x="1.3" y="1.3" width="29.4" height="19.4" fill="#fff" stroke="#c9c9c9" stroke-width="2.4"/><path d="M2 2.5 L16 13.5 L30 2.5 M2 20 L12 10.5 M30 20 L20 10.5" fill="none" stroke="#d0d0d0" stroke-width="1.6"/></svg>
<svg class="abs" style="left:188px;top:766px" width="24" height="28" viewBox="0 0 24 28"><path d="M15 1.8 H2.8 V21.5 L7 25.8 H21.3 V11" fill="none" stroke="#dcdcdc" stroke-width="2.2"/><path d="M2.8 21.5 H7 V25.8 Z" fill="#dcdcdc"/><path d="M19.8 1 V10.8 M14.9 5.9 H24" stroke="#9e9e9e" stroke-width="2.2"/></svg>
<svg class="abs" style="left:250px;top:766px" width="30" height="28" viewBox="0 0 30 28"><path d="M16 3.5 H2 V26 H24.5 V16" fill="none" stroke="#c2c2c2" stroke-width="3.6"/><path d="M10.5 17.5 L20.5 7 L25 11.5 L14.5 22 L10 22.5 Z" fill="#c2c2c2"/><path d="M22.5 4.5 L25 2 L29.5 6.5 L27 9 Z" fill="#c2c2c2"/><path d="M7 24.5 L10 21.5" stroke="#d0d0d0" stroke-width="1.6"/></svg>
<svg class="abs" style="left:318px;top:764px" width="26" height="30" viewBox="0 0 26 30"><path d="M1 1 H19 L25 7 V27 L23 29 H20.5 L17.5 24.5 L14.5 29 H11.5 L8.5 24.5 L5.5 29 H3 L1 27 Z" fill="#fff" stroke="#e2e2e2" stroke-width="2"/><path d="M19 1 V7 H25" fill="none" stroke="#e2e2e2" stroke-width="1.8"/><path d="M6 12 H14 M6 16 H20 M6 20 H20" stroke="#e4e4e4" stroke-width="1.8"/></svg>
<div class="t" style="left:382.5px;top:764.6px;font-size:27.3px;font-weight:bold;color:#000;transform:scaleX(1.0152);transform-origin:0 0;">85</div>
<div class="t" style="left:511.0px;top:764.6px;font-size:27.3px;font-weight:bold;color:#000;transform:scaleX(0.8864);transform-origin:0 0;">Specify Subject</div>
<div class="t" style="left:1172.0px;top:764.6px;font-size:27.3px;font-weight:bold;color:#000;transform:scaleX(0.8867);transform-origin:0 0;">Howard Stern</div>
<div class="t" style="left:1429.0px;top:764.6px;font-size:27.3px;font-weight:bold;color:#000;transform:scaleX(0.8838);transform-origin:0 0;">Unassigned</div>
<div class="t" style="left:1677.0px;top:764.6px;font-size:27.3px;font-weight:bold;color:#000;transform:scaleX(1.1143);transform-origin:0 0;">-</div>
<div class="t" style="left:2043.0px;top:768.3px;font-size:27.3px;font-weight:bold;color:#000;transform:scaleX(0.8529);transform-origin:0 0;">Open</div>
<div class="t" style="left:2148.0px;top:764.6px;font-size:27.3px;font-weight:bold;color:#000;transform:scaleX(0.9784);transform-origin:0 0;">03/02/2017 11:54 AM</div>
<div class="t" style="left:2434.0px;top:764.6px;font-size:27.3px;font-weight:bold;color:#000;transform:scaleX(1.1143);transform-origin:0 0;">-</div>
<div class="t" style="left:2572.0px;top:764.6px;font-size:27.3px;font-weight:bold;color:#000;transform:scaleX(1.1143);transform-origin:0 0;">-</div>
<div class="t" style="left:2707.0px;top:764.6px;font-size:27.3px;font-weight:bold;color:#000;transform:scaleX(1.1143);transform-origin:0 0;">-</div>
<div class="cell" style="left:24px;top:814px;width:68px"></div>
<div class="cell" style="left:94px;top:814px;width:64px"></div>
<div class="cell" style="left:160px;top:814px;width:64px"></div>
<div class="cell" style="left:226px;top:814px;width:64px"></div>
<div class="cell" style="left:292px;top:814px;width:64px"></div>
<div class="cell" style="left:358px;top:814px;width:97px"></div>
<div class="cell" style="left:457px;top:814px;width:689px"></div>
<div class="cell" style="left:1148px;top:814px;width:243px"></div>
<div class="cell" style="left:1393px;top:814px;width:258px"></div>
<div class="cell" style="left:1653px;top:814px;width:283px"></div>
<div class="cell" style="left:1938px;top:814px;width:184px"></div>
<div class="cell" style="left:2124px;top:814px;width:283px"></div>
<div class="cell" style="left:2409px;top:814px;width:106px"></div>
<div class="cell" style="left:2517px;top:814px;width:151px"></div>
<div class="cell" style="left:2670px;top:814px;width:125px"></div>
<svg class="abs" style="left:55.5px;top:836.5px" width="25" height="25" viewBox="0 0 25 25"><rect x="0.75" y="0.75" width="23.5" height="23" rx="5" fill="#fff" stroke="#a3a3a3" stroke-width="1.2"/></svg>
<svg class="abs" style="left:118px;top:842px" width="32" height="22" viewBox="0 0 32 22"><rect x="1.3" y="1.3" width="29.4" height="19.4" fill="#fff" stroke="#c9c9c9" stroke-width="2.4"/><path d="M2 2.5 L16 13.5 L30 2.5 M2 20 L12 10.5 M30 20 L20 10.5" fill="none" stroke="#d0d0d0" stroke-width="1.6"/></svg>
<svg class="abs" style="left:188px;top:836px" width="24" height="28" viewBox="0 0 24 28"><path d="M15 1.8 H2.8 V21.5 L7 25.8 H21.3 V11" fill="none" stroke="#dcdcdc" stroke-width="2.2"/><path d="M2.8 21.5 H7 V25.8 Z" fill="#dcdcdc"/><path d="M19.8 1 V10.8 M14.9 5.9 H24" stroke="#9e9e9e" stroke-width="2.2"/></svg>
<svg class="abs" style="left:250px;top:836px" width="30" height="28" viewBox="0 0 30 28"><path d="M16 3.5 H2 V26 H24.5 V16" fill="none" stroke="#c2c2c2" stroke-width="3.6"/><path d="M10.5 17.5 L20.5 7 L25 11.5 L14.5 22 L10 22.5 Z" fill="#c2c2c2"/><path d="M22.5 4.5 L25 2 L29.5 6.5 L27 9 Z" fill="#c2c2c2"/><path d="M7 24.5 L10 21.5" stroke="#d0d0d0" stroke-width="1.6"/></svg>
<svg class="abs" style="left:318px;top:834px" width="26" height="30" viewBox="0 0 26 30"><defs><linearGradient id="yfill" x1="0" y1="0" x2="0" y2="1"><stop offset="0" stop-color="#fffff8"/><stop offset="1" stop-color="#f8f8c0"/></linearGradient></defs><path d="M1 1 H19 L25 7 V27 L23 29 H20.5 L17.5 24.5 L14.5 29 H11.5 L8.5 24.5 L5.5 29 H3 L1 27 Z" fill="url(#yfill)" stroke="#9a9a9a" stroke-width="2"/><path d="M19 1 V7 H25 Z" fill="#9a9a9a"/><circle cx="13" cy="10.5" r="2.9" fill="#9a9a9a"/><path d="M13 6 V15" stroke="#9a9a9a" stroke-width="1.5"/><path d="M6 16.5 Q6.5 14 9 14 H17 Q19.5 14 20 16.5 V19.5 H6 Z" fill="#9a9a9a"/></svg>
<div class="t" style="left:382.5px;top:834.6px;font-size:27.3px;font-weight:bold;color:#000;transform:scaleX(1.0152);transform-origin:0 0;">84</div>
<div class="t" style="left:511.0px;top:834.6px;font-size:27.3px;font-weight:bold;color:#000;transform:scaleX(0.8886);transform-origin:0 0;">CEO’s phone list</div>
<div class="t" style="left:1172.0px;top:834.6px;font-size:27.3px;font-weight:bold;color:#000;transform:scaleX(0.8838);transform-origin:0 0;">Wendy</div>
<svg class="abs" style="left:1259px;top:835px" width="32" height="32" viewBox="0 0 32 32"><path d="M16 1.5 L29.5 6.5 Q29 19 16 30.5 Q3 19 2.5 6.5 Z" fill="#fff" stroke="#cf8a5a" stroke-width="1.6"/><path d="M16 7.5 L18.2 12.6 L23.6 13 L19.5 16.4 L20.9 21.6 L16 18.7 L11.1 21.6 L12.5 16.4 L8.4 13 L13.8 12.6 Z" fill="#e8773d"/></svg>
<div class="t" style="left:1429.0px;top:834.6px;font-size:27.3px;font-weight:bold;color:#000;transform:scaleX(0.8838);transform-origin:0 0;">Unassigned</div>
<div class="t" style="left:1677.0px;top:834.6px;font-size:27.3px;font-weight:bold;color:#000;transform:scaleX(1.1143);transform-origin:0 0;">-</div>
<div class="t" style="left:2043.0px;top:838.3px;font-size:27.3px;font-weight:bold;color:#000;transform:scaleX(0.8529);transform-origin:0 0;">Open</div>
<div class="t" style="left:2148.0px;top:834.6px;font-size:27.3px;font-weight:bold;color:#000;transform:scaleX(0.9784);transform-origin:0 0;">03/02/2017 10:49 AM</div>
<div class="t" style="left:2434.0px;top:834.6px;font-size:27.3px;font-weight:bold;color:#000;transform:scaleX(1.1143);transform-origin:0 0;">-</div>
<div class="t" style="left:2572.0px;top:834.6px;font-size:27.3px;font-weight:bold;color:#000;transform:scaleX(1.1143);transform-origin:0 0;">-</div>
<div class="t" style="left:2707.0px;top:834.6px;font-size:27.3px;font-weight:bold;color:#000;transform:scaleX(1.1143);transform-origin:0 0;">-</div>
<div class="cell" style="left:24px;top:884px;width:68px"></div>
<div class="cell" style="left:94px;top:884px;width:64px"></div>
<div class="cell" style="left:160px;top:884px;width:64px"></div>
<div class="cell" style="left:226px;top:884px;width:64px"></div>
<div class="cell" style="left:292px;top:884px;width:64px"></div>
<div class="cell" style="left:358px;top:884px;width:97px"></div>
<div class="cell" style="left:457px;top:884px;width:689px"></div>
<div class="cell" style="left:1148px;top:884px;width:243px"></div>
<div class="cell" style="left:1393px;top:884px;width:258px"></div>
<div class="cell" style="left:1653px;top:884px;width:283px"></div>
<div class="cell" style="left:1938px;top:884px;width:184px"></div>
<div class="cell" style="left:2124px;top:884px;width:283px"></div>
<div class="cell" style="left:2409px;top:884px;width:106px"></div>
<div class="cell" style="left:2517px;top:884px;width:151px"></div>
<div class="cell" style="left:2670px;top:884px;width:125px"></div>
<svg class="abs" style="left:55.5px;top:906.5px" width="25" height="25" viewBox="0 0 25 25"><rect x="0.75" y="0.75" width="23.5" height="23" rx="5" fill="#fff" stroke="#a3a3a3" stroke-width="1.2"/></svg>
<svg class="abs" style="left:118px;top:912px" width="32" height="22" viewBox="0 0 32 22"><rect x="1.3" y="1.3" width="29.4" height="19.4" fill="#fff" stroke="#c9c9c9" stroke-width="2.4"/><path d="M2 2.5 L16 13.5 L30 2.5 M2 20 L12 10.5 M30 20 L20 10.5" fill="none" stroke="#d0d0d0" stroke-width="1.6"/></svg>
<svg class="abs" style="left:188px;top:906px" width="24" height="28" viewBox="0 0 24 28"><path d="M15 1.8 H2.8 V21.5 L7 25.8 H21.3 V11" fill="none" stroke="#dcdcdc" stroke-width="2.2"/><path d="M2.8 21.5 H7 V25.8 Z" fill="#dcdcdc"/><path d="M19.8 1 V10.8 M14.9 5.9 H24" stroke="#9e9e9e" stroke-width="2.2"/></svg>
<svg class="abs" style="left:250px;top:906px" width="30" height="28" viewBox="0 0 30 28"><path d="M16 3.5 H2 V26 H24.5 V16" fill="none" stroke="#c2c2c2" stroke-width="3.6"/><path d="M10.5 17.5 L20.5 7 L25 11.5 L14.5 22 L10 22.5 Z" fill="#c2c2c2"/><path d="M22.5 4.5 L25 2 L29.5 6.5 L27 9 Z" fill="#c2c2c2"/><path d="M7 24.5 L10 21.5" stroke="#d0d0d0" stroke-width="1.6"/></svg>
<svg class="abs" style="left:318px;top:904px" width="26" height="30" viewBox="0 0 26 30"><path d="M1 1 H19 L25 7 V27 L23 29 H20.5 L17.5 24.5 L14.5 29 H11.5 L8.5 24.5 L5.5 29 H3 L1 27 Z" fill="#fbe6e8" stroke="#d42a36" stroke-width="2"/><path d="M19 1 V7 H25 Z" fill="#d42a36"/><circle cx="13" cy="10.5" r="2.9" fill="#d01c28"/><path d="M13 6 V15" stroke="#d01c28" stroke-width="1.5"/><path d="M6 16.5 Q6.5 14 9 14 H17 Q19.5 14 20 16.5 V19.5 H6 Z" fill="#d01c28"/></svg>
<div class="t" style="left:382.5px;top:904.6px;font-size:27.3px;color:#000;transform:scaleX(0.9905);transform-origin:0 0;">83</div>
<div class="t" style="left:511.0px;top:904.6px;font-size:27.3px;color:#000;transform:scaleX(0.9605);transform-origin:0 0;">User creation request - Sandy - to sales team</div>
<div class="t" style="left:1172.0px;top:904.6px;font-size:27.3px;color:#000;transform:scaleX(0.9619);transform-origin:0 0;">GAppsTest</div>
<div class="t" style="left:1429.0px;top:904.6px;font-size:27.3px;color:#000;transform:scaleX(0.9619);transform-origin:0 0;">Catrin</div>
<div class="t" style="left:1677.0px;top:904.6px;font-size:27.3px;color:#000;transform:scaleX(0.9524);transform-origin:0 0;">-</div>
<div class="t" style="left:2043.0px;top:908.3px;font-size:27.3px;color:#000;transform:scaleX(0.8910);transform-origin:0 0;">Open</div>
<div class="t" style="left:2148.0px;top:904.6px;font-size:27.3px;color:#000;transform:scaleX(0.9813);transform-origin:0 0;">03/02/2017 10:13 AM</div>
<div class="t" style="left:2434.0px;top:904.6px;font-size:27.3px;color:#000;transform:scaleX(0.9524);transform-origin:0 0;">-</div>
<div class="abs" style="left:2542px;top:908px;width:24px;height:23px;background:#fd6420;outline:1px solid #e6e6e6"></div>
<div class="t" style="left:2573.0px;top:904.6px;font-size:27.3px;color:#000;transform:scaleX(0.9619);transform-origin:0 0;">Medium</div>
<div class="t" style="left:2707.0px;top:904.6px;font-size:27.3px;color:#000;transform:scaleX(0.9524);transform-origin:0 0;">-</div>
<div class="cell" style="left:24px;top:954px;width:68px"></div>
<div class="cell" style="left:94px;top:954px;width:64px"></div>
<div class="cell" style="left:160px;top:954px;width:64px"></div>
<div class="cell" style="left:226px;top:954px;width:64px"></div>
<div class="cell" style="left:292px;top:954px;width:64px"></div>
<div class="cell" style="left:358px;top:954px;width:97px"></div>
<div class="cell" style="left:457px;top:954px;width:689px"></div>
<div class="cell" style="left:1148px;top:954px;width:243px"></div>
<div class="cell" style="left:1393px;top:954px;width:258px"></div>
<div class="cell" style="left:1653px;top:954px;width:283px"></div>
<div class="cell" style="left:1938px;top:954px;width:184px"></div>
<div class="cell" style="left:2124px;top:954px;width:283px"></div>
<div class="cell" style="left:2409px;top:954px;width:106px"></div>
<div class="cell" style="left:2517px;top:954px;width:151px"></div>
<div class="cell" style="left:2670px;top:954px;width:125px"></div>
<svg class="abs" style="left:55.5px;top:976.5px" width="25" height="25" viewBox="0 0 25 25"><rect x="0.75" y="0.75" width="23.5" height="23" rx="5" fill="#fff" stroke="#a3a3a3" stroke-width="1.2"/></svg>
<svg class="abs" style="left:118px;top:982px" width="32" height="22" viewBox="0 0 32 22"><rect x="1.3" y="1.3" width="29.4" height="19.4" fill="#fff" stroke="#c9c9c9" stroke-width="2.4"/><path d="M2 2.5 L16 13.5 L30 2.5 M2 20 L12 10.5 M30 20 L20 10.5" fill="none" stroke="#d0d0d0" stroke-width="1.6"/></svg>
<svg class="abs" style="left:188px;top:976px" width="24" height="28" viewBox="0 0 24 28"><path d="M15 1.8 H2.8 V21.5 L7 25.8 H21.3 V11" fill="none" stroke="#dcdcdc" stroke-width="2.2"/><path d="M2.8 21.5 H7 V25.8 Z" fill="#dcdcdc"/><path d="M19.8 1 V10.8 M14.9 5.9 H24" stroke="#9e9e9e" stroke-width="2.2"/></svg>
<svg class="abs" style="left:250px;top:976px" width="30" height="28" viewBox="0 0 30 28"><path d="M16 3.5 H2 V26 H24.5 V16" fill="none" stroke="#c2c2c2" stroke-width="3.6"/><path d="M10.5 17.5 L20.5 7 L25 11.5 L14.5 22 L10 22.5 Z" fill="#c2c2c2"/><path d="M22.5 4.5 L25 2 L29.5 6.5 L27 9 Z" fill="#c2c2c2"/><path d="M7 24.5 L10 21.5" stroke="#d0d0d0" stroke-width="1.6"/></svg>
<svg class="abs" style="left:318px;top:974px" width="26" height="30" viewBox="0 0 26 30"><path d="M1 1 H19 L25 7 V27 L23 29 H20.5 L17.5 24.5 L14.5 29 H11.5 L8.5 24.5 L5.5 29 H3 L1 27 Z" fill="#fff" stroke="#e2e2e2" stroke-width="2"/><path d="M19 1 V7 H25" fill="none" stroke="#e2e2e2" stroke-width="1.8"/><path d="M6 12 H14 M6 16 H20 M6 20 H20" stroke="#e4e4e4" stroke-width="1.8"/></svg>
<div class="t" style="left:382.5px;top:974.6px;font-size:27.3px;font-weight:bold;color:#000;transform:scaleX(1.0152);transform-origin:0 0;">82</div>
<div class="t" style="left:511.0px;top:974.6px;font-size:27.3px;font-weight:bold;color:#000;transform:scaleX(0.8889);transform-origin:0 0;">Desk telephone is not working properly</div>
<div class="t" style="left:1172.0px;top:974.6px;font-size:27.3px;font-weight:bold;color:#000;transform:scaleX(0.8838);transform-origin:0 0;">GAppsTest</div>
<div class="t" style="left:1429.0px;top:974.6px;font-size:27.3px;font-weight:bold;color:#000;transform:scaleX(0.8838);transform-origin:0 0;">Unassigned</div>
<div class="t" style="left:1677.0px;top:974.6px;font-size:27.3px;font-weight:bold;color:#000;transform:scaleX(1.1143);transform-origin:0 0;">-</div>
<div class="t" style="left:2043.0px;top:978.3px;font-size:27.3px;font-weight:bold;color:#000;transform:scaleX(0.8529);transform-origin:0 0;">Open</div>
<div class="t" style="left:2148.0px;top:974.6px;font-size:27.3px;font-weight:bold;color:#000;transform:scaleX(0.9784);transform-origin:0 0;">03/02/2017 10:12 AM</div>
<div class="t" style="left:2434.0px;top:974.6px;font-size:27.3px;font-weight:bold;color:#000;transform:scaleX(1.1143);transform-origin:0 0;">-</div>
<div class="t" style="left:2572.0px;top:974.6px;font-size:27.3px;font-weight:bold;color:#000;transform:scaleX(1.1143);transform-origin:0 0;">-</div>
<div class="t" style="left:2707.0px;top:974.6px;font-size:27.3px;font-weight:bold;color:#000;transform:scaleX(1.1143);transform-origin:0 0;">-</div>
<div class="cell" style="left:24px;top:1024px;width:68px"></div>
<div class="cell" style="left:94px;top:1024px;width:64px"></div>
<div class="cell" style="left:160px;top:1024px;width:64px"></div>
<div class="cell" style="left:226px;top:1024px;width:64px"></div>
<div class="cell" style="left:292px;top:1024px;width:64px"></div>
<div class="cell" style="left:358px;top:1024px;width:97px"></div>
<div class="cell" style="left:457px;top:1024px;width:689px"></div>
<div class="cell" style="left:1148px;top:1024px;width:243px"></div>
<div class="cell" style="left:1393px;top:1024px;width:258px"></div>
<div class="cell" style="left:1653px;top:1024px;width:283px"></div>
<div class="cell" style="left:1938px;top:1024px;width:184px"></div>
<div class="cell" style="left:2124px;top:1024px;width:283px"></div>
<div class="cell" style="left:2409px;top:1024px;width:106px"></div>
<div class="cell" style="left:2517px;top:1024px;width:151px"></div>
<div class="cell" style="left:2670px;top:1024px;width:125px"></div>
<svg class="abs" style="left:55.5px;top:1046.5px" width="25" height="25" viewBox="0 0 25 25"><rect x="0.75" y="0.75" width="23.5" height="23" rx="5" fill="#fff" stroke="#a3a3a3" stroke-width="1.2"/></svg>
<svg class="abs" style="left:118px;top:1052px" width="32" height="22" viewBox="0 0 32 22"><rect x="1.3" y="1.3" width="29.4" height="19.4" fill="#fff" stroke="#c9c9c9" stroke-width="2.4"/><path d="M2 2.5 L16 13.5 L30 2.5 M2 20 L12 10.5 M30 20 L20 10.5" fill="none" stroke="#d0d0d0" stroke-width="1.6"/></svg>
<svg class="abs" style="left:188px;top:1046px" width="24" height="28" viewBox="0 0 24 28"><path d="M15 1.8 H2.8 V21.5 L7 25.8 H21.3 V11" fill="none" stroke="#dcdcdc" stroke-width="2.2"/><path d="M2.8 21.5 H7 V25.8 Z" fill="#dcdcdc"/><path d="M19.8 1 V10.8 M14.9 5.9 H24" stroke="#9e9e9e" stroke-width="2.2"/></svg>
<svg class="abs" style="left:250px;top:1046px" width="30" height="28" viewBox="0 0 30 28"><path d="M16 3.5 H2 V26 H24.5 V16" fill="none" stroke="#c2c2c2" stroke-width="3.6"/><path d="M10.5 17.5 L20.5 7 L25 11.5 L14.5 22 L10 22.5 Z" fill="#c2c2c2"/><path d="M22.5 4.5 L25 2 L29.5 6.5 L27 9 Z" fill="#c2c2c2"/><path d="M7 24.5 L10 21.5" stroke="#d0d0d0" stroke-width="1.6"/></svg>
<svg class="abs" style="left:318px;top:1044px" width="26" height="30" viewBox="0 0 26 30"><defs><linearGradient id="yfill" x1="0" y1="0" x2="0" y2="1"><stop offset="0" stop-color="#fffff8"/><stop offset="1" stop-color="#f8f8c0"/></linearGradient></defs><path d="M1 1 H19 L25 7 V27 L23 29 H20.5 L17.5 24.5 L14.5 29 H11.5 L8.5 24.5 L5.5 29 H3 L1 27 Z" fill="url(#yfill)" stroke="#9a9a9a" stroke-width="2"/><path d="M19 1 V7 H25 Z" fill="#9a9a9a"/><circle cx="13" cy="10.5" r="2.9" fill="#9a9a9a"/><path d="M13 6 V15" stroke="#9a9a9a" stroke-width="1.5"/><path d="M6 16.5 Q6.5 14 9 14 H17 Q19.5 14 20 16.5 V19.5 H6 Z" fill="#9a9a9a"/></svg>
<div class="t" style="left:382.5px;top:1044.6px;font-size:27.3px;font-weight:bold;color:#000;transform:scaleX(1.0152);transform-origin:0 0;">81</div>
<div class="t" style="left:511.0px;top:1044.6px;font-size:27.3px;font-weight:bold;color:#000;transform:scaleX(0.9029);transform-origin:0 0;">Employee transfer request for - Harry - fromAdmini...</div>
<div class="t" style="left:1172.0px;top:1044.6px;font-size:27.3px;font-weight:bold;color:#000;transform:scaleX(0.8838);transform-origin:0 0;">Guest</div>
<div class="t" style="left:1429.0px;top:1044.6px;font-size:27.3px;font-weight:bold;color:#000;transform:scaleX(0.8838);transform-origin:0 0;">Unassigned</div>
<div class="t" style="left:1677.0px;top:1044.6px;font-size:27.3px;font-weight:bold;color:#000;transform:scaleX(1.1143);transform-origin:0 0;">-</div>
<div class="t" style="left:2043.0px;top:1048.3px;font-size:27.3px;font-weight:bold;color:#000;transform:scaleX(0.8529);transform-origin:0 0;">Open</div>
<div class="t" style="left:2148.0px;top:1044.6px;font-size:27.3px;font-weight:bold;color:#000;transform:scaleX(0.9784);transform-origin:0 0;">03/02/2017 08:27 AM</div>
<div class="t" style="left:2434.0px;top:1044.6px;font-size:27.3px;font-weight:bold;color:#000;transform:scaleX(1.1143);transform-origin:0 0;">-</div>
<div class="t" style="left:2572.0px;top:1044.6px;font-size:27.3px;font-weight:bold;color:#000;transform:scaleX(1.1143);transform-origin:0 0;">-</div>
<div class="t" style="left:2707.0px;top:1044.6px;font-size:27.3px;font-weight:bold;color:#000;transform:scaleX(1.1143);transform-origin:0 0;">-</div>
<div class="cell" style="left:24px;top:1094px;width:68px"></div>
<div class="cell" style="left:94px;top:1094px;width:64px"></div>
<div class="cell" style="left:160px;top:1094px;width:64px"></div>
<div class="cell" style="left:226px;top:1094px;width:64px"></div>
<div class="cell" style="left:292px;top:1094px;width:64px"></div>
<div class="cell" style="left:358px;top:1094px;width:97px"></div>
<div class="cell" style="left:457px;top:1094px;width:689px"></div>
<div class="cell" style="left:1148px;top:1094px;width:243px"></div>
<div class="cell" style="left:1393px;top:1094px;width:258px"></div>
<div class="cell" style="left:1653px;top:1094px;width:283px"></div>
<div class="cell" style="left:1938px;top:1094px;width:184px"></div>
<div class="cell" style="left:2124px;top:1094px;width:283px"></div>
<div class="cell" style="left:2409px;top:1094px;width:106px"></div>
<div class="cell" style="left:2517px;top:1094px;width:151px"></div>
<div class="cell" style="left:2670px;top:1094px;width:125px"></div>
<svg class="abs" style="left:55.5px;top:1116.5px" width="25" height="25" viewBox="0 0 25 25"><rect x="0.75" y="0.75" width="23.5" height="23" rx="5" fill="#fff" stroke="#a3a3a3" stroke-width="1.2"/></svg>
<svg class="abs" style="left:118px;top:1122px" width="32" height="22" viewBox="0 0 32 22"><rect x="1.3" y="1.3" width="29.4" height="19.4" fill="#fff" stroke="#c9c9c9" stroke-width="2.4"/><path d="M2 2.5 L16 13.5 L30 2.5 M2 20 L12 10.5 M30 20 L20 10.5" fill="none" stroke="#d0d0d0" stroke-width="1.6"/></svg>
<svg class="abs" style="left:188px;top:1116px" width="24" height="28" viewBox="0 0 24 28"><path d="M15 1.8 H2.8 V21.5 L7 25.8 H21.3 V11" fill="none" stroke="#dcdcdc" stroke-width="2.2"/><path d="M2.8 21.5 H7 V25.8 Z" fill="#dcdcdc"/><path d="M19.8 1 V10.8 M14.9 5.9 H24" stroke="#9e9e9e" stroke-width="2.2"/></svg>
<svg class="abs" style="left:250px;top:1116px" width="30" height="28" viewBox="0 0 30 28"><path d="M16 3.5 H2 V26 H24.5 V16" fill="none" stroke="#c2c2c2" stroke-width="3.6"/><path d="M10.5 17.5 L20.5 7 L25 11.5 L14.5 22 L10 22.5 Z" fill="#c2c2c2"/><path d="M22.5 4.5 L25 2 L29.5 6.5 L27 9 Z" fill="#c2c2c2"/><path d="M7 24.5 L10 21.5" stroke="#d0d0d0" stroke-width="1.6"/></svg>
<svg class="abs" style="left:318px;top:1114px" width="26" height="30" viewBox="0 0 26 30"><path d="M1 1 H19 L25 7 V27 L23 29 H20.5 L17.5 24.5 L14.5 29 H11.5 L8.5 24.5 L5.5 29 H3 L1 27 Z" fill="#fbe6e8" stroke="#d42a36" stroke-width="2"/><path d="M19 1 V7 H25 Z" fill="#d42a36"/><circle cx="13" cy="10.5" r="2.9" fill="#d01c28"/><path d="M13 6 V15" stroke="#d01c28" stroke-width="1.5"/><path d="M6 16.5 Q6.5 14 9 14 H17 Q19.5 14 20 16.5 V19.5 H6 Z" fill="#d01c28"/></svg>
<div class="t" style="left:382.5px;top:1114.6px;font-size:27.3px;color:#000;transform:scaleX(0.9905);transform-origin:0 0;">80</div>
<div class="t" style="left:511.0px;top:1114.6px;font-size:27.3px;color:#000;transform:scaleX(0.9672);transform-origin:0 0;">User creation request - Stone Banks - to sales tea...</div>
<div class="t" style="left:1172.0px;top:1114.6px;font-size:27.3px;color:#000;transform:scaleX(0.9615);transform-origin:0 0;">Howard Stern</div>
<div class="t" style="left:1429.0px;top:1114.6px;font-size:27.3px;color:#000;transform:scaleX(0.9619);transform-origin:0 0;">Catrin</div>
<div class="t" style="left:1677.0px;top:1114.6px;font-size:27.3px;color:#000;transform:scaleX(0.9524);transform-origin:0 0;">-</div>
<div class="t" style="left:2043.0px;top:1118.3px;font-size:27.3px;color:#000;transform:scaleX(0.8910);transform-origin:0 0;">Open</div>
<div class="t" style="left:2148.0px;top:1114.6px;font-size:27.3px;color:#000;transform:scaleX(0.9813);transform-origin:0 0;">03/02/2017 08:20 AM</div>
<div class="t" style="left:2434.0px;top:1114.6px;font-size:27.3px;color:#000;transform:scaleX(0.9524);transform-origin:0 0;">-</div>
<div class="abs" style="left:2542px;top:1118px;width:24px;height:23px;background:#fd6420;outline:1px solid #e6e6e6"></div>
<div class="t" style="left:2573.0px;top:1114.6px;font-size:27.3px;color:#000;transform:scaleX(0.9619);transform-origin:0 0;">Medium</div>
<div class="t" style="left:2707.0px;top:1114.6px;font-size:27.3px;color:#000;transform:scaleX(0.9524);transform-origin:0 0;">-</div>
<div class="cell" style="left:24px;top:1164px;width:68px"></div>
<div class="cell" style="left:94px;top:1164px;width:64px"></div>
<div class="cell" style="left:160px;top:1164px;width:64px"></div>
<div class="cell" style="left:226px;top:1164px;width:64px"></div>
<div class="cell" style="left:292px;top:1164px;width:64px"></div>
<div class="cell" style="left:358px;top:1164px;width:97px"></div>
<div class="cell" style="left:457px;top:1164px;width:689px"></div>
<div class="cell" style="left:1148px;top:1164px;width:243px"></div>
<div class="cell" style="left:1393px;top:1164px;width:258px"></div>
<div class="cell" style="left:1653px;top:1164px;width:283px"></div>
<div class="cell" style="left:1938px;top:1164px;width:184px"></div>
<div class="cell" style="left:2124px;top:1164px;width:283px"></div>
<div class="cell" style="left:2409px;top:1164px;width:106px"></div>
<div class="cell" style="left:2517px;top:1164px;width:151px"></div>
<div class="cell" style="left:2670px;top:1164px;width:125px"></div>
<svg class="abs" style="left:55.5px;top:1186.5px" width="25" height="25" viewBox="0 0 25 25"><rect x="0.75" y="0.75" width="23.5" height="23" rx="5" fill="#fff" stroke="#a3a3a3" stroke-width="1.2"/></svg>
<svg class="abs" style="left:118px;top:1192px" width="32" height="22" viewBox="0 0 32 22"><rect x="1.3" y="1.3" width="29.4" height="19.4" fill="#fff" stroke="#c9c9c9" stroke-width="2.4"/><path d="M2 2.5 L16 13.5 L30 2.5 M2 20 L12 10.5 M30 20 L20 10.5" fill="none" stroke="#d0d0d0" stroke-width="1.6"/></svg>
<svg class="abs" style="left:188px;top:1186px" width="24" height="28" viewBox="0 0 24 28"><path d="M15 1.8 H2.8 V21.5 L7 25.8 H21.3 V11" fill="none" stroke="#dcdcdc" stroke-width="2.2"/><path d="M2.8 21.5 H7 V25.8 Z" fill="#dcdcdc"/><path d="M19.8 1 V10.8 M14.9 5.9 H24" stroke="#9e9e9e" stroke-width="2.2"/></svg>
<svg class="abs" style="left:250px;top:1186px" width="30" height="28" viewBox="0 0 30 28"><path d="M16 3.5 H2 V26 H24.5 V16" fill="none" stroke="#c2c2c2" stroke-width="3.6"/><path d="M10.5 17.5 L20.5 7 L25 11.5 L14.5 22 L10 22.5 Z" fill="#c2c2c2"/><path d="M22.5 4.5 L25 2 L29.5 6.5 L27 9 Z" fill="#c2c2c2"/><path d="M7 24.5 L10 21.5" stroke="#d0d0d0" stroke-width="1.6"/></svg>
<svg class="abs" style="left:318px;top:1184px" width="26" height="30" viewBox="0 0 26 30"><defs><linearGradient id="yfill" x1="0" y1="0" x2="0" y2="1"><stop offset="0" stop-color="#fffff8"/><stop offset="1" stop-color="#f8f8c0"/></linearGradient></defs><path d="M1 1 H19 L25 7 V27 L23 29 H20.5 L17.5 24.5 L14.5 29 H11.5 L8.5 24.5 L5.5 29 H3 L1 27 Z" fill="url(#yfill)" stroke="#9a9a9a" stroke-width="2"/><path d="M19 1 V7 H25 Z" fill="#9a9a9a"/><circle cx="13" cy="10.5" r="2.9" fill="#9a9a9a"/><path d="M13 6 V15" stroke="#9a9a9a" stroke-width="1.5"/><path d="M6 16.5 Q6.5 14 9 14 H17 Q19.5 14 20 16.5 V19.5 H6 Z" fill="#9a9a9a"/></svg>
<div class="t" style="left:382.5px;top:1184.6px;font-size:27.3px;font-weight:bold;color:#000;transform:scaleX(1.0152);transform-origin:0 0;">79</div>
<div class="t" style="left:511.0px;top:1184.6px;font-size:27.3px;font-weight:bold;color:#000;transform:scaleX(0.8872);transform-origin:0 0;">Please deprovision $username&#x27;s mobile device</div>
<div class="t" style="left:1172.0px;top:1184.6px;font-size:27.3px;font-weight:bold;color:#000;transform:scaleX(0.8838);transform-origin:0 0;">Wendy</div>
<div class="t" style="left:1429.0px;top:1184.6px;font-size:27.3px;font-weight:bold;color:#000;transform:scaleX(0.8838);transform-origin:0 0;">Unassigned</div>
<div class="t" style="left:1677.0px;top:1184.6px;font-size:27.3px;font-weight:bold;color:#000;transform:scaleX(1.1143);transform-origin:0 0;">-</div>
<div class="t" style="left:2043.0px;top:1188.3px;font-size:27.3px;font-weight:bold;color:#000;transform:scaleX(0.8529);transform-origin:0 0;">Open</div>
<div class="t" style="left:2148.0px;top:1184.6px;font-size:27.3px;font-weight:bold;color:#000;transform:scaleX(0.9784);transform-origin:0 0;">03/02/2017 07:01 AM</div>
<div class="t" style="left:2434.0px;top:1184.6px;font-size:27.3px;font-weight:bold;color:#000;transform:scaleX(1.1143);transform-origin:0 0;">-</div>
<div class="abs" style="left:2542px;top:1188px;width:24px;height:23px;background:#0b5d12;outline:1px solid #e6e6e6"></div>
<div class="t" style="left:2573.0px;top:1184.6px;font-size:27.3px;font-weight:bold;color:#000;transform:scaleX(0.8838);transform-origin:0 0;">Normal</div>
<div class="t" style="left:2707.0px;top:1184.6px;font-size:27.3px;font-weight:bold;color:#000;transform:scaleX(1.1143);transform-origin:0 0;">-</div>
<div class="cell" style="left:24px;top:1234px;width:68px"></div>
<div class="cell" style="left:94px;top:1234px;width:64px"></div>
<div class="cell" style="left:160px;top:1234px;width:64px"></div>
<div class="cell" style="left:226px;top:1234px;width:64px"></div>
<div class="cell" style="left:292px;top:1234px;width:64px"></div>
<div class="cell" style="left:358px;top:1234px;width:97px"></div>
<div class="cell" style="left:457px;top:1234px;width:689px"></div>
<div class="cell" style="left:1148px;top:1234px;width:243px"></div>
<div class="cell" style="left:1393px;top:1234px;width:258px"></div>
<div class="cell" style="left:1653px;top:1234px;width:283px"></div>
<div class="cell" style="left:1938px;top:1234px;width:184px"></div>
<div class="cell" style="left:2124px;top:1234px;width:283px"></div>
<div class="cell" style="left:2409px;top:1234px;width:106px"></div>
<div class="cell" style="left:2517px;top:1234px;width:151px"></div>
<div class="cell" style="left:2670px;top:1234px;width:125px"></div>
<svg class="abs" style="left:55.5px;top:1256.5px" width="25" height="25" viewBox="0 0 25 25"><rect x="0.75" y="0.75" width="23.5" height="23" rx="5" fill="#fff" stroke="#a3a3a3" stroke-width="1.2"/></svg>
<svg class="abs" style="left:118px;top:1262px" width="32" height="22" viewBox="0 0 32 22"><rect x="1.3" y="1.3" width="29.4" height="19.4" fill="#fff" stroke="#c9c9c9" stroke-width="2.4"/><path d="M2 2.5 L16 13.5 L30 2.5 M2 20 L12 10.5 M30 20 L20 10.5" fill="none" stroke="#d0d0d0" stroke-width="1.6"/></svg>
<svg class="abs" style="left:188px;top:1256px" width="24" height="28" viewBox="0 0 24 28"><path d="M15 1.8 H2.8 V21.5 L7 25.8 H21.3 V11" fill="none" stroke="#dcdcdc" stroke-width="2.2"/><path d="M2.8 21.5 H7 V25.8 Z" fill="#dcdcdc"/><path d="M19.8 1 V10.8 M14.9 5.9 H24" stroke="#9e9e9e" stroke-width="2.2"/></svg>
<svg class="abs" style="left:250px;top:1256px" width="30" height="28" viewBox="0 0 30 28"><path d="M16 3.5 H2 V26 H24.5 V16" fill="none" stroke="#c2c2c2" stroke-width="3.6"/><path d="M10.5 17.5 L20.5 7 L25 11.5 L14.5 22 L10 22.5 Z" fill="#c2c2c2"/><path d="M22.5 4.5 L25 2 L29.5 6.5 L27 9 Z" fill="#c2c2c2"/><path d="M7 24.5 L10 21.5" stroke="#d0d0d0" stroke-width="1.6"/></svg>
<svg class="abs" style="left:318px;top:1254px" width="26" height="30" viewBox="0 0 26 30"><defs><linearGradient id="yfill" x1="0" y1="0" x2="0" y2="1"><stop offset="0" stop-color="#fffff8"/><stop offset="1" stop-color="#f8f8c0"/></linearGradient></defs><path d="M1 1 H19 L25 7 V27 L23 29 H20.5 L17.5 24.5 L14.5 29 H11.5 L8.5 24.5 L5.5 29 H3 L1 27 Z" fill="url(#yfill)" stroke="#9a9a9a" stroke-width="2"/><path d="M19 1 V7 H25 Z" fill="#9a9a9a"/><circle cx="13" cy="10.5" r="2.9" fill="#9a9a9a"/><path d="M13 6 V15" stroke="#9a9a9a" stroke-width="1.5"/><path d="M6 16.5 Q6.5 14 9 14 H17 Q19.5 14 20 16.5 V19.5 H6 Z" fill="#9a9a9a"/></svg>
<div class="t" style="left:382.5px;top:1254.6px;font-size:27.3px;font-weight:bold;color:#000;transform:scaleX(1.0152);transform-origin:0 0;">62</div>
<div class="t" style="left:511.0px;top:1254.6px;font-size:27.3px;font-weight:bold;color:#000;transform:scaleX(0.8889);transform-origin:0 0;">CEO&#x27;s smart phone lost</div>
<div class="t" style="left:1172.0px;top:1254.6px;font-size:27.3px;font-weight:bold;color:#000;transform:scaleX(0.8838);transform-origin:0 0;">Wendy</div>
<div class="t" style="left:1429.0px;top:1254.6px;font-size:27.3px;font-weight:bold;color:#000;transform:scaleX(0.8838);transform-origin:0 0;">Unassigned</div>
<div class="t" style="left:1677.0px;top:1254.6px;font-size:27.3px;font-weight:bold;color:#000;transform:scaleX(1.1143);transform-origin:0 0;">-</div>
<div class="t" style="left:2043.0px;top:1258.3px;font-size:27.3px;font-weight:bold;color:#000;transform:scaleX(0.8529);transform-origin:0 0;">Open</div>
<div class="t" style="left:2148.0px;top:1254.6px;font-size:27.3px;font-weight:bold;color:#000;transform:scaleX(0.9784);transform-origin:0 0;">03/02/2017 06:08 AM</div>
<div class="t" style="left:2434.0px;top:1254.6px;font-size:27.3px;font-weight:bold;color:#000;transform:scaleX(1.1143);transform-origin:0 0;">-</div>
<div class="t" style="left:2572.0px;top:1254.6px;font-size:27.3px;font-weight:bold;color:#000;transform:scaleX(1.1143);transform-origin:0 0;">-</div>
<div class="t" style="left:2707.0px;top:1254.6px;font-size:27.3px;font-weight:bold;color:#000;transform:scaleX(1.1143);transform-origin:0 0;">-</div>
<div class="cell" style="left:24px;top:1304px;width:68px"></div>
<div class="cell" style="left:94px;top:1304px;width:64px"></div>
<div class="cell" style="left:160px;top:1304px;width:64px"></div>
<div class="cell" style="left:226px;top:1304px;width:64px"></div>
<div class="cell" style="left:292px;top:1304px;width:64px"></div>
<div class="cell" style="left:358px;top:1304px;width:97px"></div>
<div class="cell" style="left:457px;top:1304px;width:689px"></div>
<div class="cell" style="left:1148px;top:1304px;width:243px"></div>
<div class="cell" style="left:1393px;top:1304px;width:258px"></div>
<div class="cell" style="left:1653px;top:1304px;width:283px"></div>
<div class="cell" style="left:1938px;top:1304px;width:184px"></div>
<div class="cell" style="left:2124px;top:1304px;width:283px"></div>
<div class="cell" style="left:2409px;top:1304px;width:106px"></div>
<div class="cell" style="left:2517px;top:1304px;width:151px"></div>
<div class="cell" style="left:2670px;top:1304px;width:125px"></div>
<svg class="abs" style="left:55.5px;top:1326.5px" width="25" height="25" viewBox="0 0 25 25"><rect x="0.75" y="0.75" width="23.5" height="23" rx="5" fill="#fff" stroke="#a3a3a3" stroke-width="1.2"/></svg>
<svg class="abs" style="left:118px;top:1332px" width="32" height="22" viewBox="0 0 32 22"><rect x="1.3" y="1.3" width="29.4" height="19.4" fill="#fff" stroke="#c9c9c9" stroke-width="2.4"/><path d="M2 2.5 L16 13.5 L30 2.5 M2 20 L12 10.5 M30 20 L20 10.5" fill="none" stroke="#d0d0d0" stroke-width="1.6"/></svg>
<svg class="abs" style="left:188px;top:1326px" width="24" height="28" viewBox="0 0 24 28"><path d="M15 1.8 H2.8 V21.5 L7 25.8 H21.3 V11" fill="none" stroke="#dcdcdc" stroke-width="2.2"/><path d="M2.8 21.5 H7 V25.8 Z" fill="#dcdcdc"/><path d="M19.8 1 V10.8 M14.9 5.9 H24" stroke="#9e9e9e" stroke-width="2.2"/></svg>
<svg class="abs" style="left:250px;top:1326px" width="30" height="28" viewBox="0 0 30 28"><path d="M16 3.5 H2 V26 H24.5 V16" fill="none" stroke="#c2c2c2" stroke-width="3.6"/><path d="M10.5 17.5 L20.5 7 L25 11.5 L14.5 22 L10 22.5 Z" fill="#c2c2c2"/><path d="M22.5 4.5 L25 2 L29.5 6.5 L27 9 Z" fill="#c2c2c2"/><path d="M7 24.5 L10 21.5" stroke="#d0d0d0" stroke-width="1.6"/></svg>
<svg class="abs" style="left:318px;top:1324px" width="26" height="30" viewBox="0 0 26 30"><path d="M1 1 H19 L25 7 V27 L23 29 H20.5 L17.5 24.5 L14.5 29 H11.5 L8.5 24.5 L5.5 29 H3 L1 27 Z" fill="#fff" stroke="#e2e2e2" stroke-width="2"/><path d="M19 1 V7 H25" fill="none" stroke="#e2e2e2" stroke-width="1.8"/><path d="M6 12 H14 M6 16 H20 M6 20 H20" stroke="#e4e4e4" stroke-width="1.8"/></svg>
<div class="t" style="left:382.5px;top:1324.6px;font-size:27.3px;font-weight:bold;color:#000;transform:scaleX(1.0152);transform-origin:0 0;">61</div>
<div class="t" style="left:511.0px;top:1324.6px;font-size:27.3px;font-weight:bold;color:#000;transform:scaleX(0.9046);transform-origin:0 0;">Employee transfer request for - $ username - from ...</div>
<div class="t" style="left:1172.0px;top:1324.6px;font-size:27.3px;font-weight:bold;color:#000;transform:scaleX(0.8838);transform-origin:0 0;">Wendy</div>
<div class="t" style="left:1429.0px;top:1324.6px;font-size:27.3px;font-weight:bold;color:#000;transform:scaleX(0.8838);transform-origin:0 0;">Unassigned</div>
<div class="t" style="left:1677.0px;top:1324.6px;font-size:27.3px;font-weight:bold;color:#000;transform:scaleX(1.1143);transform-origin:0 0;">-</div>
<div class="t" style="left:2043.0px;top:1328.3px;font-size:27.3px;font-weight:bold;color:#000;transform:scaleX(0.8529);transform-origin:0 0;">Open</div>
<div class="t" style="left:2148.0px;top:1324.6px;font-size:27.3px;font-weight:bold;color:#000;transform:scaleX(0.9784);transform-origin:0 0;">03/02/2017 05:43 AM</div>
<div class="t" style="left:2434.0px;top:1324.6px;font-size:27.3px;font-weight:bold;color:#000;transform:scaleX(1.1143);transform-origin:0 0;">-</div>
<div class="t" style="left:2572.0px;top:1324.6px;font-size:27.3px;font-weight:bold;color:#000;transform:scaleX(1.1143);transform-origin:0 0;">-</div>
<div class="t" style="left:2707.0px;top:1324.6px;font-size:27.3px;font-weight:bold;color:#000;transform:scaleX(1.1143);transform-origin:0 0;">-</div>
<div class="cell" style="left:24px;top:1374px;width:68px"></div>
<div class="cell" style="left:94px;top:1374px;width:64px"></div>
<div class="cell" style="left:160px;top:1374px;width:64px"></div>
<div class="cell" style="left:226px;top:1374px;width:64px"></div>
<div class="cell" style="left:292px;top:1374px;width:64px"></div>
<div class="cell" style="left:358px;top:1374px;width:97px"></div>
<div class="cell" style="left:457px;top:1374px;width:689px"></div>
<div class="cell" style="left:1148px;top:1374px;width:243px"></div>
<div class="cell" style="left:1393px;top:1374px;width:258px"></div>
<div class="cell" style="left:1653px;top:1374px;width:283px"></div>
<div class="cell" style="left:1938px;top:1374px;width:184px"></div>
<div class="cell" style="left:2124px;top:1374px;width:283px"></div>
<div class="cell" style="left:2409px;top:1374px;width:106px"></div>
<div class="cell" style="left:2517px;top:1374px;width:151px"></div>
<div class="cell" style="left:2670px;top:1374px;width:125px"></div>
<svg class="abs" style="left:55.5px;top:1396.5px" width="25" height="25" viewBox="0 0 25 25"><rect x="0.75" y="0.75" width="23.5" height="23" rx="5" fill="#fff" stroke="#a3a3a3" stroke-width="1.2"/></svg>
<svg class="abs" style="left:118px;top:1402px" width="32" height="22" viewBox="0 0 32 22"><rect x="1.3" y="1.3" width="29.4" height="19.4" fill="#fff" stroke="#c9c9c9" stroke-width="2.4"/><path d="M2 2.5 L16 13.5 L30 2.5 M2 20 L12 10.5 M30 20 L20 10.5" fill="none" stroke="#d0d0d0" stroke-width="1.6"/></svg>
<svg class="abs" style="left:188px;top:1396px" width="24" height="28" viewBox="0 0 24 28"><path d="M15 1.8 H2.8 V21.5 L7 25.8 H21.3 V11" fill="none" stroke="#dcdcdc" stroke-width="2.2"/><path d="M2.8 21.5 H7 V25.8 Z" fill="#dcdcdc"/><path d="M19.8 1 V10.8 M14.9 5.9 H24" stroke="#9e9e9e" stroke-width="2.2"/></svg>
<svg class="abs" style="left:250px;top:1396px" width="30" height="28" viewBox="0 0 30 28"><path d="M16 3.5 H2 V26 H24.5 V16" fill="none" stroke="#c2c2c2" stroke-width="3.6"/><path d="M10.5 17.5 L20.5 7 L25 11.5 L14.5 22 L10 22.5 Z" fill="#c2c2c2"/><path d="M22.5 4.5 L25 2 L29.5 6.5 L27 9 Z" fill="#c2c2c2"/><path d="M7 24.5 L10 21.5" stroke="#d0d0d0" stroke-width="1.6"/></svg>
<svg class="abs" style="left:318px;top:1394px" width="26" height="30" viewBox="0 0 26 30"><path d="M1 1 H19 L25 7 V27 L23 29 H20.5 L17.5 24.5 L14.5 29 H11.5 L8.5 24.5 L5.5 29 H3 L1 27 Z" fill="#fff" stroke="#e2e2e2" stroke-width="2"/><path d="M19 1 V7 H25" fill="none" stroke="#e2e2e2" stroke-width="1.8"/><path d="M6 12 H14 M6 16 H20 M6 20 H20" stroke="#e4e4e4" stroke-width="1.8"/></svg>
<div class="t" style="left:382.5px;top:1394.6px;font-size:27.3px;font-weight:bold;color:#000;transform:scaleX(1.0152);transform-origin:0 0;">60</div>
<div class="t" style="left:511.0px;top:1394.6px;font-size:27.3px;font-weight:bold;color:#000;transform:scaleX(0.9033);transform-origin:0 0;">Offboard employee request for - $username - from $...</div>
<div class="t" style="left:1172.0px;top:1394.6px;font-size:27.3px;font-weight:bold;color:#000;transform:scaleX(0.8838);transform-origin:0 0;">Wendy</div>
<div class="t" style="left:1429.0px;top:1394.6px;font-size:27.3px;font-weight:bold;color:#000;transform:scaleX(0.8838);transform-origin:0 0;">Unassigned</div>
<div class="t" style="left:1677.0px;top:1394.6px;font-size:27.3px;font-weight:bold;color:#000;transform:scaleX(1.1143);transform-origin:0 0;">-</div>
<div class="t" style="left:2043.0px;top:1398.3px;font-size:27.3px;font-weight:bold;color:#000;transform:scaleX(0.8529);transform-origin:0 0;">Open</div>
<div class="t" style="left:2148.0px;top:1394.6px;font-size:27.3px;font-weight:bold;color:#000;transform:scaleX(0.9784);transform-origin:0 0;">03/02/2017 05:32 AM</div>
<div class="t" style="left:2434.0px;top:1394.6px;font-size:27.3px;font-weight:bold;color:#000;transform:scaleX(1.1143);transform-origin:0 0;">-</div>
<div class="t" style="left:2572.0px;top:1394.6px;font-size:27.3px;font-weight:bold;color:#000;transform:scaleX(1.1143);transform-origin:0 0;">-</div>
<div class="t" style="left:2707.0px;top:1394.6px;font-size:27.3px;font-weight:bold;color:#000;transform:scaleX(1.1143);transform-origin:0 0;">-</div>
<div class="cell" style="left:24px;top:1444px;width:68px"></div>
<div class="cell" style="left:94px;top:1444px;width:64px"></div>
<div class="cell" style="left:160px;top:1444px;width:64px"></div>
<div class="cell" style="left:226px;top:1444px;width:64px"></div>
<div class="cell" style="left:292px;top:1444px;width:64px"></div>
<div class="cell" style="left:358px;top:1444px;width:97px"></div>
<div class="cell" style="left:457px;top:1444px;width:689px"></div>
<div class="cell" style="left:1148px;top:1444px;width:243px"></div>
<div class="cell" style="left:1393px;top:1444px;width:258px"></div>
<div class="cell" style="left:1653px;top:1444px;width:283px"></div>
<div class="cell" style="left:1938px;top:1444px;width:184px"></div>
<div class="cell" style="left:2124px;top:1444px;width:283px"></div>
<div class="cell" style="left:2409px;top:1444px;width:106px"></div>
<div class="cell" style="left:2517px;top:1444px;width:151px"></div>
<div class="cell" style="left:2670px;top:1444px;width:125px"></div>
<svg class="abs" style="left:55.5px;top:1466.5px" width="25" height="25" viewBox="0 0 25 25"><rect x="0.75" y="0.75" width="23.5" height="23" rx="5" fill="#fff" stroke="#a3a3a3" stroke-width="1.2"/></svg>
<svg class="abs" style="left:118px;top:1472px" width="32" height="22" viewBox="0 0 32 22"><rect x="1.3" y="1.3" width="29.4" height="19.4" fill="#fff" stroke="#c9c9c9" stroke-width="2.4"/><path d="M2 2.5 L16 13.5 L30 2.5 M2 20 L12 10.5 M30 20 L20 10.5" fill="none" stroke="#d0d0d0" stroke-width="1.6"/></svg>
<svg class="abs" style="left:188px;top:1466px" width="24" height="28" viewBox="0 0 24 28"><path d="M15 1.8 H2.8 V21.5 L7 25.8 H21.3 V11" fill="none" stroke="#dcdcdc" stroke-width="2.2"/><path d="M2.8 21.5 H7 V25.8 Z" fill="#dcdcdc"/><path d="M19.8 1 V10.8 M14.9 5.9 H24" stroke="#9e9e9e" stroke-width="2.2"/></svg>
<svg class="abs" style="left:250px;top:1466px" width="30" height="28" viewBox="0 0 30 28"><path d="M16 3.5 H2 V26 H24.5 V16" fill="none" stroke="#c2c2c2" stroke-width="3.6"/><path d="M10.5 17.5 L20.5 7 L25 11.5 L14.5 22 L10 22.5 Z" fill="#c2c2c2"/><path d="M22.5 4.5 L25 2 L29.5 6.5 L27 9 Z" fill="#c2c2c2"/><path d="M7 24.5 L10 21.5" stroke="#d0d0d0" stroke-width="1.6"/></svg>
<svg class="abs" style="left:318px;top:1464px" width="26" height="30" viewBox="0 0 26 30"><path d="M1 1 H19 L25 7 V27 L23 29 H20.5 L17.5 24.5 L14.5 29 H11.5 L8.5 24.5 L5.5 29 H3 L1 27 Z" fill="#fbe6e8" stroke="#d42a36" stroke-width="2"/><path d="M19 1 V7 H25 Z" fill="#d42a36"/><circle cx="13" cy="10.5" r="2.9" fill="#d01c28"/><path d="M13 6 V15" stroke="#d01c28" stroke-width="1.5"/><path d="M6 16.5 Q6.5 14 9 14 H17 Q19.5 14 20 16.5 V19.5 H6 Z" fill="#d01c28"/></svg>
<div class="t" style="left:382.5px;top:1464.6px;font-size:27.3px;color:#000;transform:scaleX(0.9905);transform-origin:0 0;">59</div>
<div class="t" style="left:511.0px;top:1464.6px;font-size:27.3px;color:#000;transform:scaleX(0.9671);transform-origin:0 0;">User creation request - $user_name - to sales team...</div>
<div class="t" style="left:1172.0px;top:1464.6px;font-size:27.3px;color:#000;transform:scaleX(0.9619);transform-origin:0 0;">Wendy</div>
<div class="t" style="left:1429.0px;top:1464.6px;font-size:27.3px;color:#000;transform:scaleX(0.9619);transform-origin:0 0;">Catrin</div>
<div class="t" style="left:1677.0px;top:1464.6px;font-size:27.3px;color:#000;transform:scaleX(0.9524);transform-origin:0 0;">-</div>
<div class="t" style="left:2043.0px;top:1468.3px;font-size:27.3px;color:#000;transform:scaleX(0.8910);transform-origin:0 0;">Open</div>
<div class="t" style="left:2148.0px;top:1464.6px;font-size:27.3px;color:#000;transform:scaleX(0.9813);transform-origin:0 0;">03/02/2017 05:10 AM</div>
<div class="t" style="left:2434.0px;top:1464.6px;font-size:27.3px;color:#000;transform:scaleX(0.9524);transform-origin:0 0;">-</div>
<div class="abs" style="left:2542px;top:1468px;width:24px;height:23px;background:#fd6420;outline:1px solid #e6e6e6"></div>
<div class="t" style="left:2573.0px;top:1464.6px;font-size:27.3px;color:#000;transform:scaleX(0.9619);transform-origin:0 0;">Medium</div>
<div class="t" style="left:2707.0px;top:1464.6px;font-size:27.3px;color:#000;transform:scaleX(0.9524);transform-origin:0 0;">-</div>
<div class="cell" style="left:24px;top:1514px;width:68px"></div>
<div class="cell" style="left:94px;top:1514px;width:64px"></div>
<div class="cell" style="left:160px;top:1514px;width:64px"></div>
<div class="cell" style="left:226px;top:1514px;width:64px"></div>
<div class="cell" style="left:292px;top:1514px;width:64px"></div>
<div class="cell" style="left:358px;top:1514px;width:97px"></div>
<div class="cell" style="left:457px;top:1514px;width:689px"></div>
<div class="cell" style="left:1148px;top:1514px;width:243px"></div>
<div class="cell" style="left:1393px;top:1514px;width:258px"></div>
<div class="cell" style="left:1653px;top:1514px;width:283px"></div>
<div class="cell" style="left:1938px;top:1514px;width:184px"></div>
<div class="cell" style="left:2124px;top:1514px;width:283px"></div>
<div class="cell" style="left:2409px;top:1514px;width:106px"></div>
<div class="cell" style="left:2517px;top:1514px;width:151px"></div>
<div class="cell" style="left:2670px;top:1514px;width:125px"></div>
<svg class="abs" style="left:55.5px;top:1536.5px" width="25" height="25" viewBox="0 0 25 25"><rect x="0.75" y="0.75" width="23.5" height="23" rx="5" fill="#fff" stroke="#a3a3a3" stroke-width="1.2"/></svg>
<svg class="abs" style="left:118px;top:1542px" width="32" height="22" viewBox="0 0 32 22"><rect x="1.3" y="1.3" width="29.4" height="19.4" fill="#fff" stroke="#c9c9c9" stroke-width="2.4"/><path d="M2 2.5 L16 13.5 L30 2.5 M2 20 L12 10.5 M30 20 L20 10.5" fill="none" stroke="#d0d0d0" stroke-width="1.6"/></svg>
<svg class="abs" style="left:188px;top:1536px" width="24" height="28" viewBox="0 0 24 28"><path d="M15 1.8 H2.8 V21.5 L7 25.8 H21.3 V11" fill="none" stroke="#dcdcdc" stroke-width="2.2"/><path d="M2.8 21.5 H7 V25.8 Z" fill="#dcdcdc"/><path d="M19.8 1 V10.8 M14.9 5.9 H24" stroke="#9e9e9e" stroke-width="2.2"/></svg>
<svg class="abs" style="left:250px;top:1536px" width="30" height="28" viewBox="0 0 30 28"><path d="M16 3.5 H2 V26 H24.5 V16" fill="none" stroke="#c2c2c2" stroke-width="3.6"/><path d="M10.5 17.5 L20.5 7 L25 11.5 L14.5 22 L10 22.5 Z" fill="#c2c2c2"/><path d="M22.5 4.5 L25 2 L29.5 6.5 L27 9 Z" fill="#c2c2c2"/><path d="M7 24.5 L10 21.5" stroke="#d0d0d0" stroke-width="1.6"/></svg>
<svg class="abs" style="left:318px;top:1534px" width="26" height="30" viewBox="0 0 26 30"><path d="M1 1 H19 L25 7 V27 L23 29 H20.5 L17.5 24.5 L14.5 29 H11.5 L8.5 24.5 L5.5 29 H3 L1 27 Z" fill="#fff" stroke="#e2e2e2" stroke-width="2"/><path d="M19 1 V7 H25" fill="none" stroke="#e2e2e2" stroke-width="1.8"/><path d="M6 12 H14 M6 16 H20 M6 20 H20" stroke="#e4e4e4" stroke-width="1.8"/></svg>
<div class="t" style="left:382.5px;top:1534.6px;font-size:27.3px;font-weight:bold;color:#000;transform:scaleX(1.0152);transform-origin:0 0;">58</div>
<div class="t" style="left:511.0px;top:1534.6px;font-size:27.3px;font-weight:bold;color:#000;transform:scaleX(0.8865);transform-origin:0 0;">Router configuration upgrade</div>
<div class="t" style="left:1172.0px;top:1534.6px;font-size:27.3px;font-weight:bold;color:#000;transform:scaleX(0.8871);transform-origin:0 0;">Adam Smith</div>
<div class="t" style="left:1429.0px;top:1534.6px;font-size:27.3px;font-weight:bold;color:#000;transform:scaleX(0.8838);transform-origin:0 0;">Unassigned</div>
<div class="t" style="left:1677.0px;top:1534.6px;font-size:27.3px;font-weight:bold;color:#000;transform:scaleX(1.1143);transform-origin:0 0;">-</div>
<div class="t" style="left:2043.0px;top:1538.3px;font-size:27.3px;font-weight:bold;color:#000;transform:scaleX(0.8529);transform-origin:0 0;">Open</div>
<div class="t" style="left:2148.0px;top:1534.6px;font-size:27.3px;font-weight:bold;color:#000;transform:scaleX(0.9784);transform-origin:0 0;">02/02/2017 07:05 AM</div>
<div class="t" style="left:2434.0px;top:1534.6px;font-size:27.3px;font-weight:bold;color:#000;transform:scaleX(1.1143);transform-origin:0 0;">-</div>
<div class="t" style="left:2572.0px;top:1534.6px;font-size:27.3px;font-weight:bold;color:#000;transform:scaleX(1.1143);transform-origin:0 0;">-</div>
<div class="t" style="left:2707.0px;top:1534.6px;font-size:27.3px;font-weight:bold;color:#000;transform:scaleX(1.1143);transform-origin:0 0;">-</div>
<div class="cell" style="left:24px;top:1584px;width:68px"></div>
<div class="cell" style="left:94px;top:1584px;width:64px"></div>
<div class="cell" style="left:160px;top:1584px;width:64px"></div>
<div class="cell" style="left:226px;top:1584px;width:64px"></div>
<div class="cell" style="left:292px;top:1584px;width:64px"></div>
<div class="cell" style="left:358px;top:1584px;width:97px"></div>
<div class="cell" style="left:457px;top:1584px;width:689px"></div>
<div class="cell" style="left:1148px;top:1584px;width:243px"></div>
<div class="cell" style="left:1393px;top:1584px;width:258px"></div>
<div class="cell" style="left:1653px;top:1584px;width:283px"></div>
<div class="cell" style="left:1938px;top:1584px;width:184px"></div>
<div class="cell" style="left:2124px;top:1584px;width:283px"></div>
<div class="cell" style="left:2409px;top:1584px;width:106px"></div>
<div class="cell" style="left:2517px;top:1584px;width:151px"></div>
<div class="cell" style="left:2670px;top:1584px;width:125px"></div>
<svg class="abs" style="left:55.5px;top:1606.5px" width="25" height="25" viewBox="0 0 25 25"><rect x="0.75" y="0.75" width="23.5" height="23" rx="5" fill="#fff" stroke="#a3a3a3" stroke-width="1.2"/></svg>
<svg class="abs" style="left:118px;top:1612px" width="32" height="22" viewBox="0 0 32 22"><rect x="1.3" y="1.3" width="29.4" height="19.4" fill="#fff" stroke="#c9c9c9" stroke-width="2.4"/><path d="M2 2.5 L16 13.5 L30 2.5 M2 20 L12 10.5 M30 20 L20 10.5" fill="none" stroke="#d0d0d0" stroke-width="1.6"/></svg>
<svg class="abs" style="left:188px;top:1606px" width="24" height="28" viewBox="0 0 24 28"><path d="M15 1.8 H2.8 V21.5 L7 25.8 H21.3 V11" fill="none" stroke="#dcdcdc" stroke-width="2.2"/><path d="M2.8 21.5 H7 V25.8 Z" fill="#dcdcdc"/><path d="M19.8 1 V10.8 M14.9 5.9 H24" stroke="#9e9e9e" stroke-width="2.2"/></svg>
<svg class="abs" style="left:250px;top:1606px" width="30" height="28" viewBox="0 0 30 28"><path d="M16 3.5 H2 V26 H24.5 V16" fill="none" stroke="#c2c2c2" stroke-width="3.6"/><path d="M10.5 17.5 L20.5 7 L25 11.5 L14.5 22 L10 22.5 Z" fill="#c2c2c2"/><path d="M22.5 4.5 L25 2 L29.5 6.5 L27 9 Z" fill="#c2c2c2"/><path d="M7 24.5 L10 21.5" stroke="#d0d0d0" stroke-width="1.6"/></svg>
<svg class="abs" style="left:318px;top:1604px" width="26" height="30" viewBox="0 0 26 30"><path d="M1 1 H19 L25 7 V27 L23 29 H20.5 L17.5 24.5 L14.5 29 H11.5 L8.5 24.5 L5.5 29 H3 L1 27 Z" fill="#fff" stroke="#e2e2e2" stroke-width="2"/><path d="M19 1 V7 H25" fill="none" stroke="#e2e2e2" stroke-width="1.8"/><path d="M6 12 H14 M6 16 H20 M6 20 H20" stroke="#e4e4e4" stroke-width="1.8"/></svg>
<div class="t" style="left:382.5px;top:1604.6px;font-size:27.3px;font-weight:bold;color:#000;transform:scaleX(1.0152);transform-origin:0 0;">57</div>
<div class="t" style="left:511.0px;top:1604.6px;font-size:27.3px;font-weight:bold;color:#000;transform:scaleX(0.8891);transform-origin:0 0;">Unable to login</div>
<div class="t" style="left:1172.0px;top:1604.6px;font-size:27.3px;font-weight:bold;color:#000;transform:scaleX(0.8838);transform-origin:0 0;">Guest</div>
<div class="t" style="left:1429.0px;top:1604.6px;font-size:27.3px;font-weight:bold;color:#000;transform:scaleX(0.8838);transform-origin:0 0;">Unassigned</div>
<div class="t" style="left:1677.0px;top:1604.6px;font-size:27.3px;font-weight:bold;color:#000;transform:scaleX(0.9784);transform-origin:0 0;">01/02/2017 10:50 AM</div>
<svg class="abs" style="left:2008px;top:1603px" width="22" height="31" viewBox="0 0 22 31"><path d="M2 1 V31" stroke="#f47a7a" stroke-width="3"/><path d="M3 2 L21 9 L3 15 Z" fill="#f47a7a"/></svg>
<div class="t" style="left:2043.0px;top:1608.3px;font-size:27.3px;font-weight:bold;color:#000;transform:scaleX(0.8529);transform-origin:0 0;">Open</div>
<div class="t" style="left:2148.0px;top:1604.6px;font-size:27.3px;font-weight:bold;color:#000;transform:scaleX(0.9784);transform-origin:0 0;">01/02/2017 09:50 AM</div>
<div class="t" style="left:2434.0px;top:1604.6px;font-size:27.3px;font-weight:bold;color:#000;transform:scaleX(1.1143);transform-origin:0 0;">-</div>
<div class="abs" style="left:2542px;top:1608px;width:24px;height:23px;background:#f0141e;outline:1px solid #e6e6e6"></div>
<div class="t" style="left:2573.0px;top:1604.6px;font-size:27.3px;font-weight:bold;color:#000;transform:scaleX(0.8838);transform-origin:0 0;">High</div>
<div class="t" style="left:2707.0px;top:1604.6px;font-size:27.3px;font-weight:bold;color:#000;transform:scaleX(1.1143);transform-origin:0 0;">-</div>
<svg class="abs" style="left:0;top:1618px" width="14" height="12" viewBox="0 0 14 12"><path d="M0 3 Q1 9 5 12 H0 Z" fill="#000"/></svg>
<svg class="abs" style="left:2784px;top:1618px" width="14" height="12" viewBox="0 0 14 12"><path d="M14 4 Q12 10 8 12 H14 Z" fill="#000"/></svg>
</body></html>
